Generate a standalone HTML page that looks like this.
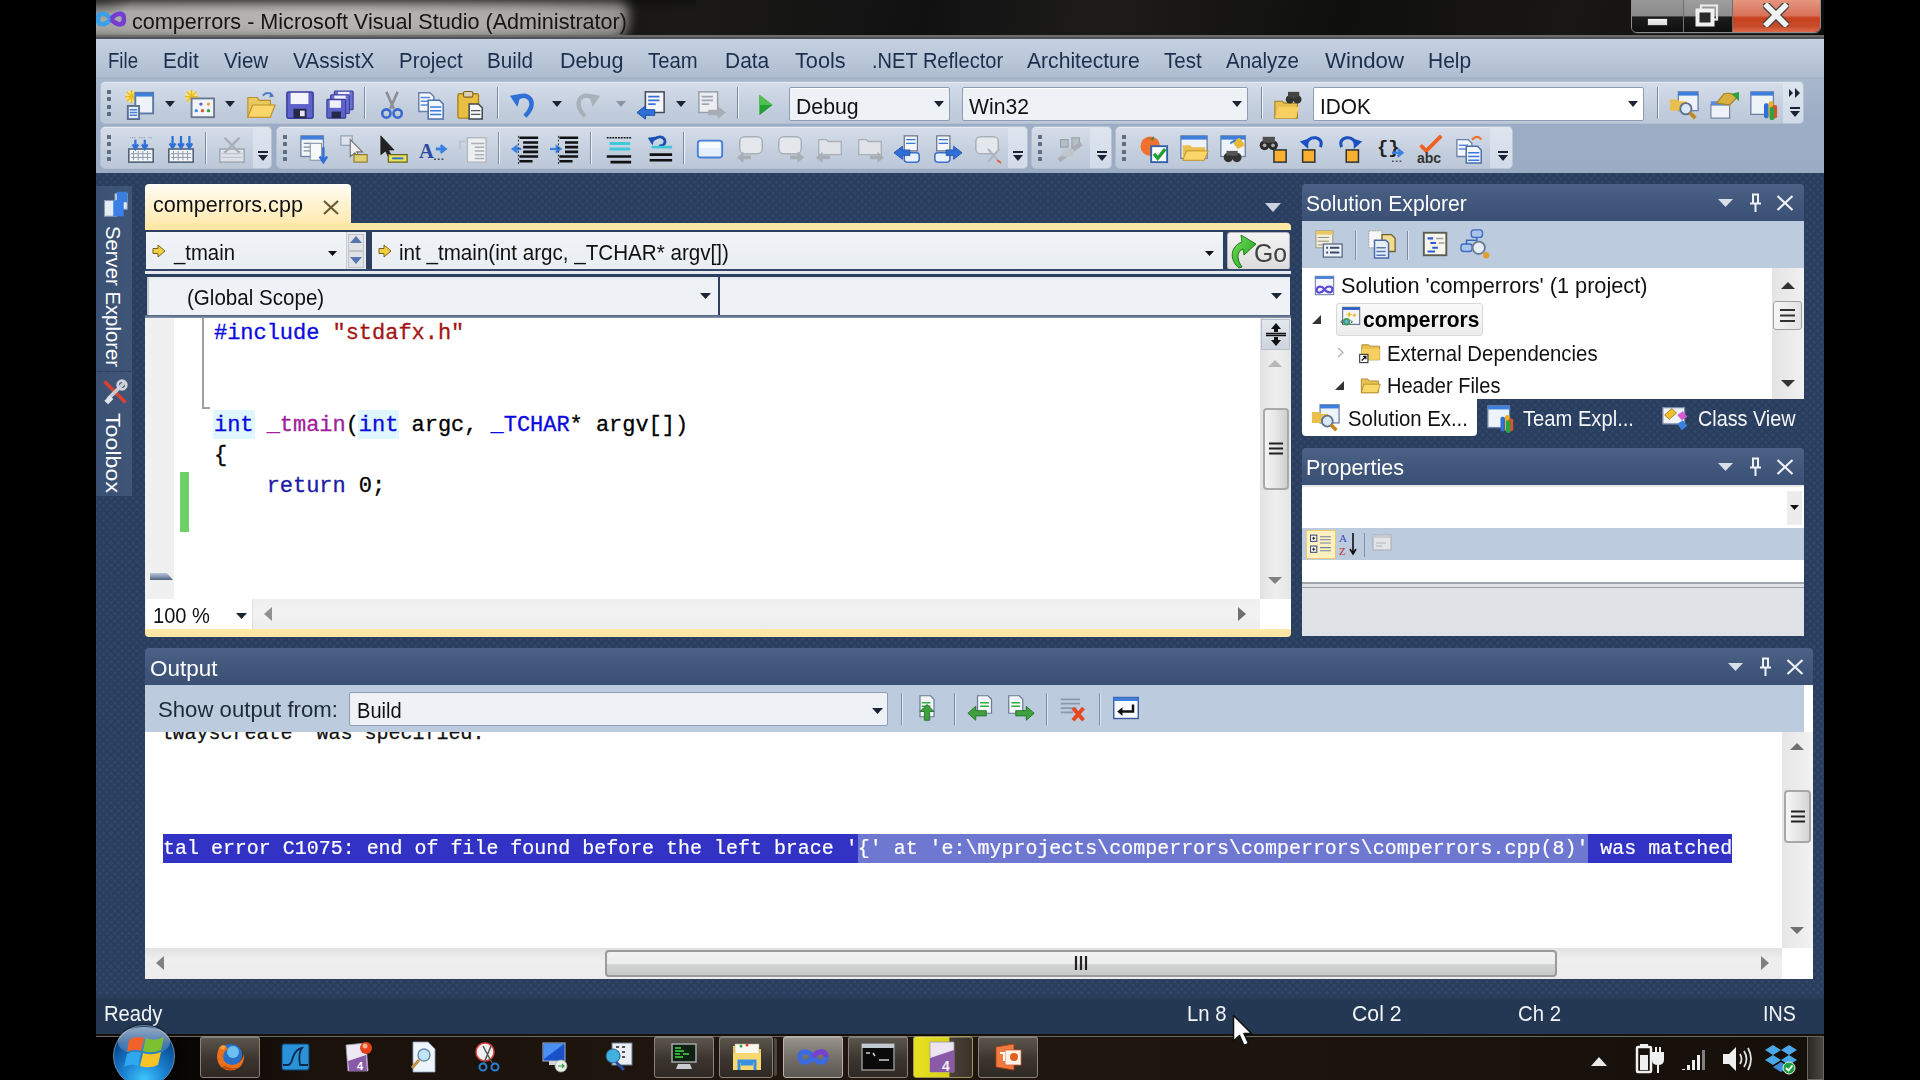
<!DOCTYPE html>
<html><head><meta charset="utf-8"><style>
*{margin:0;padding:0;box-sizing:border-box}
html,body{width:1920px;height:1080px;overflow:hidden;background:#000;font-family:"Liberation Sans",sans-serif}
.a{position:absolute}
.t{white-space:pre}
.pat{background-color:#293d5c;background-image:radial-gradient(circle,#30466a 0,#30466a 1.2px,transparent 2.2px),radial-gradient(circle,#30466a 0,#30466a 1.2px,transparent 2.2px);background-size:7.45px 7.45px;background-position:0 0,3.72px 3.72px}
</style></head><body>
<div class="a pat" style="left:96px;top:0;width:1728px;height:1034px"></div>
<div class="a" style="left:96px;top:0;width:1728px;height:39px;overflow:hidden;background:linear-gradient(100deg,#121110 0,#1a1918 35%,#111 48%,#1d1c1b 58%,#0f0f0e 72%,#181716 85%,#0d0d0c 100%)"><div class="a" style="left:-30px;top:-8px;width:562px;height:48px;background:radial-gradient(ellipse 60% 70% at 45% 55%,#bab9b5,#a8a7a3 70%,#8e8d89);border-radius:18px;filter:blur(6px)"></div><div class="a" style="left:0;top:0;width:600px;height:39px;background:linear-gradient(rgba(10,10,10,0.55) 0,rgba(10,10,10,0.15) 7px,transparent 12px)"></div><div class="a" style="left:-20px;top:-20px;width:60px;height:40px;background:radial-gradient(ellipse at 30% 30%,rgba(20,20,20,0.6),transparent 70%)"></div></div>
<div class="a" style="left:96px;top:35px;width:1728px;height:2px;background:#6c6c6a"></div>
<div class="a" style="left:96px;top:37px;width:1728px;height:2px;background:#50545a"></div>
<div class="a" style="left:96px;top:39px;width:1728px;height:40px;background:linear-gradient(#c6d2e1,#b0bed2 92%,#9eaec3 100%)"></div>
<div class="a" style="left:96px;top:79px;width:1728px;height:94px;background:linear-gradient(#a9b8cc,#9dadc5 40%,#9aabc3)"></div>
<div class="a" style="left:96px;top:993px;width:1728px;height:41px;background:linear-gradient(rgba(37,56,83,0) 0,#253853 8px,#253853)"></div>
<div class="a" style="left:96px;top:1034px;width:1728px;height:46px;background:linear-gradient(90deg,#000 0,#050302 4%,#1a110b 12%,#21170f 40%,#1c140d 70%,#150f0a 100%)"></div>
<div class="a" style="left:96px;top:1034px;width:1728px;height:2px;background:#15110d"></div>
<div class="a" style="left:96px;top:1036px;width:1728px;height:1px;background:#6e6a62"></div>
<svg class="a" style="left:96px;top:9px" width="30" height="20" viewBox="0 0 30 20"><path d="M2 10 C2 3,9 3,15 10 C21 17,28 17,28 10 C28 3,21 3,15 10 C9 17,2 17,2 10Z" fill="none" stroke="#3aa0e8" stroke-width="4.5"/><path d="M15 10 C21 17,28 17,28 10 C28 3,21 3,15 10" fill="none" stroke="#7a3ad0" stroke-width="4.5"/></svg>
<div class="a t" style="left:132px;top:10.87px;font-size:22px;line-height:22px;color:#151515;font-weight:normal;font-family:'Liberation Sans',sans-serif;transform-origin:0 0;transform:scaleX(0.9811);">comperrors - Microsoft Visual Studio (Administrator)</div>
<div class="a" style="left:1631px;top:-3px;width:190px;height:36px;border:1px solid #8a8c90;border-radius:0 0 6px 6px;overflow:hidden;box-shadow:0 1px 0 #2a2a2a"><div class="a" style="left:0;top:0;width:51px;height:35px;background:linear-gradient(#9a9a9a 0,#8a8a8a 50%,#1c1c1c 55%,#0e0e0e 100%)"></div><div class="a" style="left:52px;top:0;width:48px;height:35px;background:linear-gradient(#a0a0a0 0,#8e8e8e 50%,#1c1c1c 55%,#0e0e0e 100%)"></div><div class="a" style="left:51px;top:0;width:1px;height:35px;background:#707070"></div><div class="a" style="left:100px;top:0;width:1px;height:35px;background:#707070"></div><div class="a" style="left:101px;top:0;width:89px;height:35px;background:linear-gradient(#e89a82 0,#d8715a 50%,#c8401c 57%,#c84a2a 80%,#e07050 100%)"></div></div>
<div class="a" style="left:1647px;top:18px;width:21px;height:8px;background:linear-gradient(#f4f4f4,#d8d8d8);border:1px solid #333;border-radius:1px"></div>
<svg class="a" style="left:1694px;top:3px" width="26" height="24" viewBox="0 0 26 24"><rect x="7" y="2.5" width="16" height="14" fill="none" stroke="#e8e8e8" stroke-width="2.2"/><rect x="3.5" y="7.5" width="15" height="14" fill="#2a2a2a" stroke="#f0f0f0" stroke-width="4"/></svg>
<svg class="a" style="left:1763px;top:3px" width="26" height="24" viewBox="0 0 26 24"><path d="M4 3 L22 21 M22 3 L4 21" stroke="#404040" stroke-width="8" stroke-linecap="square"/><path d="M4 3 L22 21 M22 3 L4 21" stroke="#f2f2f2" stroke-width="5.5" stroke-linecap="square"/></svg>
<div class="a t" style="left:108.4px;top:49.70px;font-size:22.2px;line-height:22.2px;color:#1c2f4d;font-weight:normal;font-family:'Liberation Sans',sans-serif;transform-origin:0 0;transform:scaleX(0.8386);">File</div>
<div class="a t" style="left:163px;top:49.70px;font-size:22.2px;line-height:22.2px;color:#1c2f4d;font-weight:normal;font-family:'Liberation Sans',sans-serif;transform-origin:0 0;transform:scaleX(0.9332);">Edit</div>
<div class="a t" style="left:223.5px;top:49.70px;font-size:22.2px;line-height:22.2px;color:#1c2f4d;font-weight:normal;font-family:'Liberation Sans',sans-serif;transform-origin:0 0;transform:scaleX(0.9262);">View</div>
<div class="a t" style="left:292.5px;top:49.70px;font-size:22.2px;line-height:22.2px;color:#1c2f4d;font-weight:normal;font-family:'Liberation Sans',sans-serif;transform-origin:0 0;transform:scaleX(0.9349);">VAssistX</div>
<div class="a t" style="left:398.8px;top:49.70px;font-size:22.2px;line-height:22.2px;color:#1c2f4d;font-weight:normal;font-family:'Liberation Sans',sans-serif;transform-origin:0 0;transform:scaleX(0.9219);">Project</div>
<div class="a t" style="left:487px;top:49.70px;font-size:22.2px;line-height:22.2px;color:#1c2f4d;font-weight:normal;font-family:'Liberation Sans',sans-serif;transform-origin:0 0;transform:scaleX(0.9318);">Build</div>
<div class="a t" style="left:560px;top:49.70px;font-size:22.2px;line-height:22.2px;color:#1c2f4d;font-weight:normal;font-family:'Liberation Sans',sans-serif;transform-origin:0 0;transform:scaleX(0.9722);">Debug</div>
<div class="a t" style="left:648.4px;top:49.70px;font-size:22.2px;line-height:22.2px;color:#1c2f4d;font-weight:normal;font-family:'Liberation Sans',sans-serif;transform-origin:0 0;transform:scaleX(0.9137);">Team</div>
<div class="a t" style="left:724.5px;top:49.70px;font-size:22.2px;line-height:22.2px;color:#1c2f4d;font-weight:normal;font-family:'Liberation Sans',sans-serif;transform-origin:0 0;transform:scaleX(0.9447);">Data</div>
<div class="a t" style="left:794.7px;top:49.70px;font-size:22.2px;line-height:22.2px;color:#1c2f4d;font-weight:normal;font-family:'Liberation Sans',sans-serif;transform-origin:0 0;transform:scaleX(0.9783);">Tools</div>
<div class="a t" style="left:871.6px;top:49.70px;font-size:22.2px;line-height:22.2px;color:#1c2f4d;font-weight:normal;font-family:'Liberation Sans',sans-serif;transform-origin:0 0;transform:scaleX(0.9038);">.NET Reflector</div>
<div class="a t" style="left:1027px;top:49.70px;font-size:22.2px;line-height:22.2px;color:#1c2f4d;font-weight:normal;font-family:'Liberation Sans',sans-serif;transform-origin:0 0;transform:scaleX(0.9514);">Architecture</div>
<div class="a t" style="left:1164px;top:49.70px;font-size:22.2px;line-height:22.2px;color:#1c2f4d;font-weight:normal;font-family:'Liberation Sans',sans-serif;transform-origin:0 0;transform:scaleX(0.9235);">Test</div>
<div class="a t" style="left:1226px;top:49.70px;font-size:22.2px;line-height:22.2px;color:#1c2f4d;font-weight:normal;font-family:'Liberation Sans',sans-serif;transform-origin:0 0;transform:scaleX(0.9243);">Analyze</div>
<div class="a t" style="left:1325px;top:49.70px;font-size:22.2px;line-height:22.2px;color:#1c2f4d;font-weight:normal;font-family:'Liberation Sans',sans-serif;transform-origin:0 0;transform:scaleX(1.0005);">Window</div>
<div class="a t" style="left:1428.4px;top:49.70px;font-size:22.2px;line-height:22.2px;color:#1c2f4d;font-weight:normal;font-family:'Liberation Sans',sans-serif;transform-origin:0 0;transform:scaleX(0.9440);">Help</div>
<div class="a" style="left:100px;top:81px;width:1704px;height:43px;background:linear-gradient(#d5dde9,#c4cfde 60%,#bcc8d8);border:1px solid #b3bfd0;border-radius:5px;box-shadow:inset 0 1px 0 #e4eaf2"></div>
<div class="a" style="left:1783px;top:81px;width:21px;height:43px;background:linear-gradient(#dde5ef,#d2dbe8);border-radius:0 5px 5px 0;border:1px solid #b8c4d4;border-left:none"></div>
<div class="a" style="left:107px;top:90.0px;width:4px;height:4px;background:#5e6d82;border-radius:0.5px"></div>
<div class="a" style="left:107px;top:97.3px;width:4px;height:4px;background:#5e6d82;border-radius:0.5px"></div>
<div class="a" style="left:107px;top:104.6px;width:4px;height:4px;background:#5e6d82;border-radius:0.5px"></div>
<div class="a" style="left:107px;top:111.9px;width:4px;height:4px;background:#5e6d82;border-radius:0.5px"></div>
<div class="a" style="left:100px;top:126px;width:172px;height:43px;background:linear-gradient(#d5dde9,#c4cfde 60%,#bcc8d8);border:1px solid #b3bfd0;border-radius:5px;box-shadow:inset 0 1px 0 #e4eaf2"></div>
<div class="a" style="left:253px;top:126px;width:19px;height:43px;background:linear-gradient(#dde5ef,#d2dbe8);border-radius:0 5px 5px 0;border:1px solid #b8c4d4;border-left:none"></div>
<div class="a" style="left:107px;top:135.0px;width:4px;height:4px;background:#5e6d82;border-radius:0.5px"></div>
<div class="a" style="left:107px;top:142.3px;width:4px;height:4px;background:#5e6d82;border-radius:0.5px"></div>
<div class="a" style="left:107px;top:149.6px;width:4px;height:4px;background:#5e6d82;border-radius:0.5px"></div>
<div class="a" style="left:107px;top:156.9px;width:4px;height:4px;background:#5e6d82;border-radius:0.5px"></div>
<div class="a" style="left:276px;top:126px;width:752px;height:43px;background:linear-gradient(#d5dde9,#c4cfde 60%,#bcc8d8);border:1px solid #b3bfd0;border-radius:5px;box-shadow:inset 0 1px 0 #e4eaf2"></div>
<div class="a" style="left:1008px;top:126px;width:20px;height:43px;background:linear-gradient(#dde5ef,#d2dbe8);border-radius:0 5px 5px 0;border:1px solid #b8c4d4;border-left:none"></div>
<div class="a" style="left:283px;top:135.0px;width:4px;height:4px;background:#5e6d82;border-radius:0.5px"></div>
<div class="a" style="left:283px;top:142.3px;width:4px;height:4px;background:#5e6d82;border-radius:0.5px"></div>
<div class="a" style="left:283px;top:149.6px;width:4px;height:4px;background:#5e6d82;border-radius:0.5px"></div>
<div class="a" style="left:283px;top:156.9px;width:4px;height:4px;background:#5e6d82;border-radius:0.5px"></div>
<div class="a" style="left:1031px;top:126px;width:81px;height:43px;background:linear-gradient(#d5dde9,#c4cfde 60%,#bcc8d8);border:1px solid #b3bfd0;border-radius:5px;box-shadow:inset 0 1px 0 #e4eaf2"></div>
<div class="a" style="left:1090px;top:126px;width:22px;height:43px;background:linear-gradient(#dde5ef,#d2dbe8);border-radius:0 5px 5px 0;border:1px solid #b8c4d4;border-left:none"></div>
<div class="a" style="left:1038px;top:135.0px;width:4px;height:4px;background:#5e6d82;border-radius:0.5px"></div>
<div class="a" style="left:1038px;top:142.3px;width:4px;height:4px;background:#5e6d82;border-radius:0.5px"></div>
<div class="a" style="left:1038px;top:149.6px;width:4px;height:4px;background:#5e6d82;border-radius:0.5px"></div>
<div class="a" style="left:1038px;top:156.9px;width:4px;height:4px;background:#5e6d82;border-radius:0.5px"></div>
<div class="a" style="left:1115px;top:126px;width:398px;height:43px;background:linear-gradient(#d5dde9,#c4cfde 60%,#bcc8d8);border:1px solid #b3bfd0;border-radius:5px;box-shadow:inset 0 1px 0 #e4eaf2"></div>
<div class="a" style="left:1490px;top:126px;width:23px;height:43px;background:linear-gradient(#dde5ef,#d2dbe8);border-radius:0 5px 5px 0;border:1px solid #b8c4d4;border-left:none"></div>
<div class="a" style="left:1122px;top:135.0px;width:4px;height:4px;background:#5e6d82;border-radius:0.5px"></div>
<div class="a" style="left:1122px;top:142.3px;width:4px;height:4px;background:#5e6d82;border-radius:0.5px"></div>
<div class="a" style="left:1122px;top:149.6px;width:4px;height:4px;background:#5e6d82;border-radius:0.5px"></div>
<div class="a" style="left:1122px;top:156.9px;width:4px;height:4px;background:#5e6d82;border-radius:0.5px"></div>
<div class="a" style="left:364px;top:87px;width:1px;height:32px;background:#7d8ca2;box-shadow:1px 0 0 #eef2f7"></div>
<div class="a" style="left:497px;top:87px;width:1px;height:32px;background:#7d8ca2;box-shadow:1px 0 0 #eef2f7"></div>
<div class="a" style="left:737px;top:87px;width:1px;height:32px;background:#7d8ca2;box-shadow:1px 0 0 #eef2f7"></div>
<div class="a" style="left:1261px;top:87px;width:1px;height:32px;background:#7d8ca2;box-shadow:1px 0 0 #eef2f7"></div>
<div class="a" style="left:1657px;top:87px;width:1px;height:32px;background:#7d8ca2;box-shadow:1px 0 0 #eef2f7"></div>
<div class="a" style="left:205px;top:132px;width:1px;height:32px;background:#7d8ca2;box-shadow:1px 0 0 #eef2f7"></div>
<div class="a" style="left:498px;top:132px;width:1px;height:32px;background:#7d8ca2;box-shadow:1px 0 0 #eef2f7"></div>
<div class="a" style="left:590px;top:132px;width:1px;height:32px;background:#7d8ca2;box-shadow:1px 0 0 #eef2f7"></div>
<div class="a" style="left:683px;top:132px;width:1px;height:32px;background:#7d8ca2;box-shadow:1px 0 0 #eef2f7"></div>
<svg class="a" style="left:165px;top:101px" width="10" height="6" viewBox="0 0 10 6"><path d="M0 0 H10 L5.0 6Z" fill="#1a2435"/></svg>
<svg class="a" style="left:225px;top:101px" width="10" height="6" viewBox="0 0 10 6"><path d="M0 0 H10 L5.0 6Z" fill="#1a2435"/></svg>
<svg class="a" style="left:552px;top:101px" width="10" height="6" viewBox="0 0 10 6"><path d="M0 0 H10 L5.0 6Z" fill="#1a2435"/></svg>
<svg class="a" style="left:616px;top:101px" width="10" height="6" viewBox="0 0 10 6"><path d="M0 0 H10 L5.0 6Z" fill="#8a94a3"/></svg>
<svg class="a" style="left:676px;top:101px" width="10" height="6" viewBox="0 0 10 6"><path d="M0 0 H10 L5.0 6Z" fill="#1a2435"/></svg>
<div class="a" style="left:258px;top:151px;width:10px;height:2px;background:#1a2435"></div>
<svg class="a" style="left:258px;top:155px" width="10" height="6" viewBox="0 0 10 6"><path d="M0 0 H10 L5 6Z" fill="#1a2435"/></svg>
<div class="a" style="left:1013px;top:151px;width:10px;height:2px;background:#1a2435"></div>
<svg class="a" style="left:1013px;top:155px" width="10" height="6" viewBox="0 0 10 6"><path d="M0 0 H10 L5 6Z" fill="#1a2435"/></svg>
<div class="a" style="left:1097px;top:151px;width:10px;height:2px;background:#1a2435"></div>
<svg class="a" style="left:1097px;top:155px" width="10" height="6" viewBox="0 0 10 6"><path d="M0 0 H10 L5 6Z" fill="#1a2435"/></svg>
<div class="a" style="left:1498px;top:151px;width:10px;height:2px;background:#1a2435"></div>
<svg class="a" style="left:1498px;top:155px" width="10" height="6" viewBox="0 0 10 6"><path d="M0 0 H10 L5 6Z" fill="#1a2435"/></svg>
<svg class="a" style="left:1789px;top:88px" width="12" height="10" viewBox="0 0 12 10"><path d="M0 1 L4 5 L0 9Z M6 0 L11 5 L6 10Z" fill="#1a2435"/></svg>
<div class="a" style="left:1790px;top:107px;width:10px;height:2px;background:#1a2435"></div>
<svg class="a" style="left:1790px;top:111px" width="10" height="6" viewBox="0 0 10 6"><path d="M0 0 H10 L5 6Z" fill="#1a2435"/></svg>
<div class="a" style="left:789px;top:87px;width:161px;height:34px;background:#eef2f7;border:1px solid #8e9db3;border-radius:2px;box-shadow:inset 0 1px 0 #fff"></div>
<div class="a t" style="left:796px;top:96.00px;font-size:22.2px;line-height:22.2px;color:#111;font-weight:normal;font-family:'Liberation Sans',sans-serif;transform-origin:0 0;transform:scaleX(0.9584);">Debug</div>
<svg class="a" style="left:934px;top:101px" width="10" height="6" viewBox="0 0 10 6"><path d="M0 0 H10 L5.0 6Z" fill="#1a2435"/></svg>
<div class="a" style="left:962px;top:87px;width:286px;height:34px;background:#eef2f7;border:1px solid #8e9db3;border-radius:2px;box-shadow:inset 0 1px 0 #fff"></div>
<div class="a t" style="left:969px;top:96.00px;font-size:22.2px;line-height:22.2px;color:#111;font-weight:normal;font-family:'Liberation Sans',sans-serif;transform-origin:0 0;transform:scaleX(0.9535);">Win32</div>
<svg class="a" style="left:1232px;top:101px" width="10" height="6" viewBox="0 0 10 6"><path d="M0 0 H10 L5.0 6Z" fill="#1a2435"/></svg>
<div class="a" style="left:1313px;top:87px;width:331px;height:34px;background:#ffffff;border:1px solid #8e9db3;border-radius:2px;box-shadow:inset 0 1px 0 #fff"></div>
<div class="a t" style="left:1320px;top:96.00px;font-size:22.2px;line-height:22.2px;color:#111;font-weight:normal;font-family:'Liberation Sans',sans-serif;transform-origin:0 0;transform:scaleX(0.9396);">IDOK</div>
<svg class="a" style="left:1628px;top:101px" width="10" height="6" viewBox="0 0 10 6"><path d="M0 0 H10 L5.0 6Z" fill="#1a2435"/></svg>
<svg class="a" style="left:125px;top:90px" width="30" height="30" viewBox="0 0 16 16"><circle cx="3.5" cy="3.5" r="3.2" fill="#f7e27a"/><path d="M3.5 0 V7 M0 3.5 H7 M1 1 L6 6 M6 1 L1 6" stroke="#e9b820" stroke-width="0.7"/><rect x="5.5" y="1.5" width="9.5" height="11" fill="#eef3fa" stroke="#5a78a8"/><rect x="5.5" y="1.5" width="9.5" height="2" fill="#3f7fdc"/><rect x="1.5" y="8.5" width="6" height="7" fill="#e4ecf8" stroke="#5a6e90"/><path d="M2.5 10.5h4M2.5 12h4M2.5 13.5h4" stroke="#4a82d8" stroke-width="0.8"/></svg>
<svg class="a" style="left:185px;top:90px" width="30" height="30" viewBox="0 0 16 16"><circle cx="3.5" cy="3.5" r="3.2" fill="#f7e27a"/><path d="M3.5 0 V7 M0 3.5 H7 M1 1 L6 6 M6 1 L1 6" stroke="#e9b820" stroke-width="0.7"/><rect x="3.5" y="4.5" width="12" height="10" fill="#f1f4f9" stroke="#6a7890"/><circle cx="8.5" cy="7.5" r="0.9" fill="#6a5ad0"/><circle cx="12.5" cy="7.5" r="0.9" fill="#f0a030"/><circle cx="6" cy="11" r="0.9" fill="#3a8ee0"/><circle cx="9.3" cy="11" r="0.9" fill="#e05030"/><circle cx="12.5" cy="11" r="0.9" fill="#30a040"/></svg>
<svg class="a" style="left:246px;top:90px" width="30" height="30" viewBox="0 0 16 16"><path d="M1 4 h5 l1 1.5 h6 v9 H1Z" fill="#e9c860" stroke="#b89030" stroke-width="0.6"/><path d="M1 14.5 L3.5 8 H15.5 L13 14.5Z" fill="#fbd66a" stroke="#c09028" stroke-width="0.6"/><path d="M9 3 Q11 0.5 14 2.5" fill="none" stroke="#4a78c0" stroke-width="1"/><path d="M13 1 L15 3.5 L12.5 4Z" fill="#4a78c0"/></svg>
<svg class="a" style="left:285px;top:90px" width="30" height="30" viewBox="0 0 16 16"><rect x="1" y="1" width="14" height="14" rx="1" fill="#5e63cc" stroke="#3a3e98" stroke-width="0.8"/><rect x="3" y="1.5" width="9.5" height="6" fill="#f4f5fa"/><rect x="4.5" y="10" width="7" height="5" fill="#26284a"/><rect x="8" y="11" width="2.5" height="3" fill="#e8e8f0"/></svg>
<svg class="a" style="left:325px;top:90px" width="30" height="30" viewBox="0 0 16 16"><rect x="5" y="0.5" width="10" height="10" rx="0.5" fill="#6a6fd0" stroke="#3a3e98" stroke-width="0.6"/><rect x="7" y="1" width="6" height="2" fill="#eef"/><rect x="3" y="2.5" width="10" height="10" rx="0.5" fill="#6a6fd0" stroke="#3a3e98" stroke-width="0.6"/><rect x="5" y="3" width="6" height="2" fill="#eef"/><rect x="1" y="5" width="10" height="10" rx="0.5" fill="#5e63cc" stroke="#3a3e98" stroke-width="0.6"/><rect x="2.5" y="5.5" width="6" height="4" fill="#f0f0f8"/><rect x="3.5" y="11.5" width="5" height="3.5" fill="#26284a"/></svg>
<svg class="a" style="left:377px;top:90px" width="30" height="30" viewBox="0 0 16 16"><path d="M5 1 L9 10 M11 1 L7 10" stroke="#8a8e98" stroke-width="1.4"/><circle cx="5" cy="12.5" r="2.2" fill="none" stroke="#3a6ad0" stroke-width="1.4"/><circle cx="11" cy="12.5" r="2.2" fill="none" stroke="#3a6ad0" stroke-width="1.4"/></svg>
<svg class="a" style="left:416px;top:90px" width="30" height="30" viewBox="0 0 16 16"><path d="M1.5 1.5 h6 l2 2 v8 h-8Z" fill="#f4f7fc" stroke="#6a80a8" stroke-width="0.8"/><path d="M2.5 4h5M2.5 6h5M2.5 8h5" stroke="#5a8ae0" stroke-width="0.7"/><path d="M6.5 5.5 h6 l2 2 v8 h-8Z" fill="#f4f7fc" stroke="#4a70b0" stroke-width="0.8"/><path d="M7.5 9h6M7.5 11h6M7.5 13h6" stroke="#3a7ae0" stroke-width="0.8"/></svg>
<svg class="a" style="left:456px;top:90px" width="30" height="30" viewBox="0 0 16 16"><rect x="1" y="2" width="11" height="13" rx="1" fill="#e8bf40" stroke="#a88020" stroke-width="0.7"/><rect x="4" y="0.8" width="5" height="3" rx="0.8" fill="#d8d0b0" stroke="#806020" stroke-width="0.6"/><path d="M7 7.5 h5 l2 2 v6 h-7Z" fill="#f4f6fa" stroke="#404850" stroke-width="0.8"/><path d="M8 11h5M8 13h5" stroke="#505860" stroke-width="0.7"/></svg>
<svg class="a" style="left:508px;top:90px" width="30" height="30" viewBox="0 0 16 16"><path d="M4 5 Q9 1 12 5 Q14 9 9 14" fill="none" stroke="#2e70d8" stroke-width="2.4"/><path d="M1 3 L7 2 L5 9Z" fill="#2e70d8"/></svg>
<svg class="a" style="left:572px;top:90px" width="30" height="30" viewBox="0 0 16 16"><path d="M12 5 Q7 1 4 5 Q2 9 7 14" fill="none" stroke="#a8b0ba" stroke-width="2.2"/><path d="M15 3 L9 2 L11 9Z" fill="#a8b0ba"/></svg>
<svg class="a" style="left:636px;top:90px" width="30" height="30" viewBox="0 0 16 16"><rect x="5" y="1" width="10" height="11" fill="#f4f6fa" stroke="#404a58" stroke-width="0.8"/><path d="M6.5 3.5h6M6.5 5.5h6M6.5 7.5h4" stroke="#3a70d8" stroke-width="0.9"/><path d="M0.5 12 L5 8.5 V10.5 H10 V13.5 H5 V15.5Z" fill="#2e70d8" stroke="#1a4aa0" stroke-width="0.5"/></svg>
<svg class="a" style="left:697px;top:90px" width="30" height="30" viewBox="0 0 16 16"><rect x="1" y="1" width="10" height="11" fill="#eceef2" stroke="#9aa0a8" stroke-width="0.8"/><path d="M2.5 3.5h6M2.5 5.5h6M2.5 7.5h4" stroke="#a0a6b0" stroke-width="0.9"/><path d="M15.5 12 L11 8.5 V10.5 H6 V13.5 H11 V15.5Z" fill="#a8adb5"/></svg>
<svg class="a" style="left:750px;top:90px" width="30" height="30" viewBox="0 0 16 16"><path d="M5 2.5 L12 8 L5 13.5Z" fill="#20a030"/><path d="M5 2.5 L12 8 L5 8Z" fill="#50c050"/></svg>
<svg class="a" style="left:1273px;top:90px" width="30" height="30" viewBox="0 0 16 16"><path d="M1 6 h4 l1 1 h7 v8 H1Z" fill="#e8c050" stroke="#a88020" stroke-width="0.6"/><path d="M1 15 L3 9 H14 L12 15Z" fill="#f8d060"/><circle cx="9" cy="5" r="2.2" fill="#333"/><circle cx="13" cy="5" r="2.2" fill="#333"/><rect x="8" y="1" width="6" height="3" fill="#444"/></svg>
<svg class="a" style="left:1669px;top:90px" width="30" height="30" viewBox="0 0 16 16"><rect x="5" y="1" width="10.5" height="10" fill="#eef3fa" stroke="#6a80a8" stroke-width="0.7"/><rect x="5" y="1" width="10.5" height="2" fill="#3f7fdc"/><path d="M0.5 5 h4 l1 1 h4 v5 h-9Z" fill="#e8c050"/><circle cx="9" cy="10" r="3" fill="#d8e8f8" stroke="#607090" stroke-width="1"/><path d="M11 12 L14 15" stroke="#c08820" stroke-width="2"/></svg>
<svg class="a" style="left:1709px;top:90px" width="30" height="30" viewBox="0 0 16 16"><rect x="1" y="8" width="10" height="7" fill="#eef2f8" stroke="#7a8aa8" stroke-width="0.7"/><rect x="1" y="6" width="10" height="2" fill="#5a8ae0"/><path d="M4 7 L8 2 Q12 1 15 4 L11 8Z" fill="#d8b040" stroke="#a08020" stroke-width="0.6"/><path d="M12 2 L16 1 V6Z" fill="#30a040"/></svg>
<svg class="a" style="left:1749px;top:90px" width="30" height="30" viewBox="0 0 16 16"><rect x="1" y="1" width="12" height="12" fill="#eef3fa" stroke="#6a80a8" stroke-width="0.7"/><rect x="1" y="1" width="12" height="2" fill="#3f7fdc"/><rect x="8" y="7" width="2.5" height="8" rx="1" fill="#2e70d8"/><rect x="10.5" y="6" width="2.5" height="9" rx="1" fill="#f0b020"/><rect x="12.5" y="8" width="2.5" height="7" rx="1" fill="#e05028"/><rect x="11" y="9" width="2.5" height="7" rx="1" fill="#30a040"/></svg>
<svg class="a" style="left:126px;top:134px" width="30" height="30" viewBox="0 0 16 16"><rect x="1.5" y="8" width="13" height="7" fill="#f4f6f8" stroke="#4a5a70" stroke-width="0.8"/><path d="M2.5 10.5h11M2.5 12.5h11M4 9v5M6.5 9v5M9 9v5M11.5 9v5" stroke="#8a98a8" stroke-width="0.5"/><path d="M2 2 L5 2 M7 2 L10 2 M12 2 L14 2" stroke="#8090a8" stroke-width="0.6" stroke-dasharray="0.6 0.6"/><path d="M5 3 V7 M3.5 5.5 L5 8 L6.5 5.5 M10 3 V7 M8.5 5.5 L10 8 L11.5 5.5" stroke="#2e70d8" stroke-width="1.2" fill="none"/></svg>
<svg class="a" style="left:166px;top:134px" width="30" height="30" viewBox="0 0 16 16"><rect x="1.5" y="8" width="13" height="7" fill="#f4f6f8" stroke="#4a5a70" stroke-width="0.8"/><path d="M2.5 10.5h11M2.5 12.5h11M4 9v5M6.5 9v5M9 9v5M11.5 9v5" stroke="#8a98a8" stroke-width="0.5"/><path d="M3.5 1 V7 M2 5 L3.5 7.5 L5 5 M8 1 V7 M6.5 5 L8 7.5 L9.5 5 M12.5 1 V7 M11 5 L12.5 7.5 L14 5" stroke="#2e70d8" stroke-width="1.2" fill="none"/></svg>
<svg class="a" style="left:217px;top:134px" width="30" height="30" viewBox="0 0 16 16"><rect x="1.5" y="8" width="13" height="7" fill="#dde2e8" stroke="#a0a8b2" stroke-width="0.8"/><path d="M2.5 10.5h11M2.5 12.5h11" stroke="#b8c0c8" stroke-width="0.5"/><path d="M4 2 L12 10 M12 2 L4 10" stroke="#a8aeb6" stroke-width="1.3"/></svg>
<svg class="a" style="left:299px;top:134px" width="30" height="30" viewBox="0 0 16 16"><rect x="1" y="1" width="12" height="11" fill="#f2f5fa" stroke="#6a80a8" stroke-width="0.7"/><rect x="1" y="1" width="12" height="2" fill="#3f7fdc"/><path d="M2.5 5h4M2.5 7h4M2.5 9h4" stroke="#8090a0" stroke-width="0.7"/><rect x="6" y="5" width="6" height="9" fill="#f8f9fb" stroke="#8a98a8" stroke-width="0.6"/><path d="M13 7 V14 M11 12 L13 15 L15 12" stroke="#2e70d8" stroke-width="1.3" fill="none"/></svg>
<svg class="a" style="left:339px;top:134px" width="30" height="30" viewBox="0 0 16 16"><rect x="1" y="1" width="6" height="5" fill="#dde4ee" stroke="#8a9ab0" stroke-width="0.6"/><path d="M6 3 V12 L8.5 10 L10 13 L11 12.5 L9.5 9.5 L12.5 9.5Z" fill="#f0f0f0" stroke="#707070" stroke-width="0.6"/><rect x="8" y="11" width="7" height="4" fill="#e0d070" stroke="#8a7a30" stroke-width="0.6"/></svg>
<svg class="a" style="left:379px;top:134px" width="30" height="30" viewBox="0 0 16 16"><path d="M1 1 V11 L3.5 9 L5.5 13 L7 12.3 L5 8.5 L8 8.5Z" fill="#222" stroke="#111" stroke-width="0.4"/><rect x="5" y="11" width="10" height="4" fill="#e8e060" stroke="#6a6a20" stroke-width="0.7"/><rect x="7" y="12.5" width="6" height="1" fill="#2a70c0"/></svg>
<svg class="a" style="left:419px;top:134px" width="30" height="30" viewBox="0 0 16 16"><text x="0" y="13" font-family="Liberation Serif" font-weight="bold" font-size="11" fill="#2a4aa0">A</text><path d="M9 8 H13 M11.5 6 L14 8 L11.5 10" stroke="#3a80e0" stroke-width="1.5" fill="none"/><path d="M8 13.5h1M10 13.5h1M12 13.5h1" stroke="#445" stroke-width="0.8"/></svg>
<svg class="a" style="left:458px;top:134px" width="30" height="30" viewBox="0 0 16 16"><rect x="5" y="2" width="10" height="13" fill="#eceef0" stroke="#b0b6be" stroke-width="0.7"/><path d="M7 5h7M9 7h5M9 9h5M9 11h5M9 13h5" stroke="#a8aeb6" stroke-width="0.8"/><path d="M1 4 V8 M1 4 H4" stroke="#b8bec6" stroke-width="0.8"/></svg>
<svg class="a" style="left:510px;top:134px" width="30" height="30" viewBox="0 0 16 16"><path d="M5 2h10M7 4.5h8M7 7h8M7 9.5h8M5 12h10M5 14.5h7" stroke="#111" stroke-width="1.4"/><path d="M0.5 8 L4 5.5 V10.5Z" fill="#3a80e0"/><path d="M3 8h3" stroke="#3a80e0" stroke-width="1.2"/><path d="M4.5 1v15" stroke="#222" stroke-width="0.5" stroke-dasharray="1 1"/></svg>
<svg class="a" style="left:550px;top:134px" width="30" height="30" viewBox="0 0 16 16"><path d="M5 2h10M8 4.5h7M8 7h7M8 9.5h7M5 12h10M5 14.5h7" stroke="#111" stroke-width="1.4"/><path d="M6.5 8 L3 5.5 V10.5Z" fill="#3a80e0"/><path d="M0 8h3.5" stroke="#3a80e0" stroke-width="1.2"/><path d="M4.5 1v15" stroke="#222" stroke-width="0.5" stroke-dasharray="1 1"/></svg>
<svg class="a" style="left:603px;top:134px" width="30" height="30" viewBox="0 0 16 16"><path d="M2 2h13" stroke="#111" stroke-width="0.9" stroke-dasharray="1 0.5"/><path d="M3.5 5h11M3.5 8h11" stroke="#40c8d8" stroke-width="1.6"/><path d="M2 12h13M4 15h11" stroke="#111" stroke-width="1.4"/></svg>
<svg class="a" style="left:644px;top:134px" width="30" height="30" viewBox="0 0 16 16"><path d="M5 3 Q9 0 11 3 Q12 6 8 6.5" fill="none" stroke="#1a50b0" stroke-width="1.5"/><path d="M2 2 L6 1.5 L4.5 6Z" fill="#1a50b0"/><path d="M4 7h11" stroke="#40c8d8" stroke-width="1.4"/><path d="M3 11h12M3 14h12" stroke="#111" stroke-width="1.4"/></svg>
<svg class="a" style="left:695px;top:134px" width="30" height="30" viewBox="0 0 16 16"><rect x="1.5" y="3.5" width="13" height="9" rx="1.5" fill="#e4eefc" stroke="#4a80d8" stroke-width="1"/><rect x="2.5" y="4.5" width="11" height="3" fill="#f8fbff"/></svg>
<svg class="a" style="left:736px;top:134px" width="30" height="30" viewBox="0 0 16 16"><rect x="2" y="1.5" width="12" height="9" rx="2.5" fill="#e4e8ec" stroke="#aab0b8" stroke-width="0.8"/><path d="M0.5 12.5 L4 9.5 V11.5 H8 V13.5 H4 V15.5Z" fill="#a8aeb6"/></svg>
<svg class="a" style="left:775px;top:134px" width="30" height="30" viewBox="0 0 16 16"><rect x="2" y="1.5" width="12" height="9" rx="2.5" fill="#e4e8ec" stroke="#aab0b8" stroke-width="0.8"/><path d="M15.5 12.5 L12 9.5 V11.5 H8 V13.5 H12 V15.5Z" fill="#a8aeb6"/></svg>
<svg class="a" style="left:815px;top:134px" width="30" height="30" viewBox="0 0 16 16"><path d="M2 3 h4 l1 1 h7 v7 H2Z" fill="#dfe3e8" stroke="#aab0b8" stroke-width="0.7"/><path d="M0.5 12.5 L4 9.5 V11.5 H8 V13.5 H4 V15.5Z" fill="#a8aeb6"/></svg>
<svg class="a" style="left:855px;top:134px" width="30" height="30" viewBox="0 0 16 16"><path d="M2 3 h4 l1 1 h7 v7 H2Z" fill="#dfe3e8" stroke="#aab0b8" stroke-width="0.7"/><path d="M15.5 12.5 L12 9.5 V11.5 H8 V13.5 H12 V15.5Z" fill="#a8aeb6"/></svg>
<svg class="a" style="left:893px;top:134px" width="30" height="30" viewBox="0 0 16 16"><rect x="6" y="1" width="7" height="8" fill="#f4f6fa" stroke="#5a6a88" stroke-width="0.6"/><path d="M7 3h5M7 5h5" stroke="#3a78d8" stroke-width="0.7"/><rect x="6" y="10" width="8" height="5" rx="1.5" fill="#e8f0fa" stroke="#3a70c8" stroke-width="0.8"/><path d="M0.5 10 L5 6.5 V8.5 H9 V11.5 H5 V13.5Z" fill="#2e70d8" stroke="#1a4aa0" stroke-width="0.4"/></svg>
<svg class="a" style="left:933px;top:134px" width="30" height="30" viewBox="0 0 16 16"><rect x="2" y="1" width="7" height="8" fill="#f4f6fa" stroke="#5a6a88" stroke-width="0.6"/><path d="M3 3h5M3 5h5" stroke="#3a78d8" stroke-width="0.7"/><rect x="1" y="10" width="8" height="5" rx="1.5" fill="#e8f0fa" stroke="#3a70c8" stroke-width="0.8"/><path d="M15.5 10 L11 6.5 V8.5 H7 V11.5 H11 V13.5Z" fill="#2e70d8" stroke="#1a4aa0" stroke-width="0.4"/></svg>
<svg class="a" style="left:973px;top:134px" width="30" height="30" viewBox="0 0 16 16"><rect x="1.5" y="1.5" width="12" height="9" rx="2.5" fill="#e4e8ec" stroke="#aab0b8" stroke-width="0.8"/><path d="M8 8 L14 15 M14 8 L8 15" stroke="#b0b6be" stroke-width="1.2"/><path d="M13 14 L15 15.5" stroke="#e06040" stroke-width="1"/></svg>
<svg class="a" style="left:1055px;top:134px" width="30" height="30" viewBox="0 0 16 16"><path d="M3 3 h4 v4 h-4Z M9 2 h4 v5 h-4Z" fill="#b8bec6" stroke="#98a0a8" stroke-width="0.6"/><path d="M2 14 L14 5" stroke="#a8aeb6" stroke-width="2.5"/><path d="M4 8 h6 v4 h-6Z" fill="#c0c6cc"/></svg>
<svg class="a" style="left:1139px;top:134px" width="30" height="30" viewBox="0 0 16 16"><circle cx="6" cy="6.5" r="5.2" fill="#f07030"/><path d="M4 1.5 L6 3 L8 1 L7.5 3.5Z" fill="#308030"/><rect x="6.5" y="6.5" width="8.5" height="8.5" fill="#f8fbff" stroke="#3060a8" stroke-width="1"/><path d="M8 10.5 L10 13 L14 8" fill="none" stroke="#20a030" stroke-width="1.8"/></svg>
<svg class="a" style="left:1179px;top:134px" width="30" height="30" viewBox="0 0 16 16"><rect x="1" y="1" width="14" height="12" fill="#eef3fa" stroke="#6a80a8" stroke-width="0.7"/><rect x="1" y="1" width="14" height="2" fill="#3f7fdc"/><path d="M2 6 h4 l1 1 h7 v7 H2Z" fill="#e8c050"/><path d="M2 14 L4 9 H15.5 L13.5 14Z" fill="#fbd66a" stroke="#c09028" stroke-width="0.5"/></svg>
<svg class="a" style="left:1219px;top:134px" width="30" height="30" viewBox="0 0 16 16"><rect x="1" y="1" width="13" height="11" fill="#eef3fa" stroke="#6a80a8" stroke-width="0.7"/><rect x="1" y="1" width="13" height="2" fill="#3f7fdc"/><path d="M7 4 L11 2 L14 6 L10 8Z" fill="#e8b838"/><path d="M6 5 L9 3" stroke="#3a80e0" stroke-width="1"/><circle cx="5" cy="12.5" r="2.5" fill="#333"/><circle cx="9.5" cy="12.5" r="2.5" fill="#333"/><rect x="4" y="9" width="6" height="2.5" fill="#555"/></svg>
<svg class="a" style="left:1258px;top:134px" width="30" height="30" viewBox="0 0 16 16"><circle cx="3.5" cy="6" r="2.6" fill="#2a2a2a"/><circle cx="8" cy="6" r="2.6" fill="#2a2a2a"/><rect x="2.5" y="1.5" width="6.5" height="3" fill="#505050"/><circle cx="3.5" cy="6" r="1" fill="#aaa"/><circle cx="8" cy="6" r="1" fill="#aaa"/><rect x="8.5" y="8.5" width="6.5" height="6.5" fill="#f8b030" stroke="#303030" stroke-width="0.8"/></svg>
<svg class="a" style="left:1297px;top:134px" width="30" height="30" viewBox="0 0 16 16"><path d="M5 5.5 Q6 1.5 10 2 Q14 3 12.5 7" fill="none" stroke="#1a50c0" stroke-width="1.6"/><path d="M1.5 4 L6 2.5 L6 8Z" fill="#1a50c0"/><rect x="3" y="8.5" width="6.5" height="6.5" fill="#f8b030" stroke="#303030" stroke-width="0.8"/></svg>
<svg class="a" style="left:1335px;top:134px" width="30" height="30" viewBox="0 0 16 16"><path d="M11 5.5 Q10 1.5 6 2 Q2 3 3.5 7" fill="none" stroke="#1a50c0" stroke-width="1.6"/><path d="M14.5 4 L10 2.5 L10 8Z" fill="#1a50c0"/><rect x="6" y="8.5" width="6.5" height="6.5" fill="#f8b030" stroke="#303030" stroke-width="0.8"/></svg>
<svg class="a" style="left:1377px;top:134px" width="30" height="30" viewBox="0 0 16 16"><text x="0" y="10" font-family="Liberation Mono" font-weight="bold" font-size="10" fill="#222">{}</text><path d="M8 10h5M11 8l2.5 2l-2.5 2" stroke="#3a80e0" stroke-width="1.3" fill="none"/><path d="M8 14.5h1M10 14.5h1M12 14.5h1" stroke="#556" stroke-width="0.8"/></svg>
<svg class="a" style="left:1415px;top:134px" width="30" height="30" viewBox="0 0 16 16"><path d="M3 6 L6 9 L14 1" fill="none" stroke="#f06020" stroke-width="2"/><text x="1" y="15.5" font-family="Liberation Sans" font-weight="bold" font-size="7.5" fill="#333">abc</text></svg>
<svg class="a" style="left:1455px;top:134px" width="30" height="30" viewBox="0 0 16 16"><path d="M1 3 h6 l2 2 v7 h-8Z" fill="#f4f7fc" stroke="#6a80a8" stroke-width="0.7"/><path d="M2 6h5M2 8h5" stroke="#5a8ae0" stroke-width="0.7"/><path d="M6 6.5 h6 l2 2 v7 h-8Z" fill="#f4f7fc" stroke="#4a70b0" stroke-width="0.8"/><path d="M7 10h6M7 12h6M7 14h6" stroke="#3a7ae0" stroke-width="0.8"/><path d="M9 3 Q12 0 14 3" fill="none" stroke="#f07030" stroke-width="1.2"/></svg>
<div class="a" style="left:96px;top:186px;width:37px;height:185px;background:linear-gradient(90deg,#3b5173,#3f5679);border-right:1px solid #2d4262"></div>
<div class="a" style="left:96px;top:372px;width:37px;height:124px;background:linear-gradient(90deg,#3b5173,#3f5679);border-right:1px solid #2d4262"></div>
<svg class="a" style="left:101px;top:190px" width="28" height="28" viewBox="0 0 16 16"><rect x="8" y="2" width="7" height="9" fill="#dfe8f4" stroke="#8898b0" stroke-width="0.6"/><rect x="2" y="6" width="7" height="9" fill="#e4ecf4" stroke="#8898b0" stroke-width="0.6"/><rect x="9" y="1" width="6" height="6" fill="#3a7ee0"/><rect x="7" y="6" width="6" height="9" fill="#3a80e8"/></svg>
<svg class="a" style="left:101px;top:378px" width="28" height="28" viewBox="0 0 16 16"><path d="M2 2 L14 14" stroke="#d84030" stroke-width="2"/><path d="M14 2 L4 12" stroke="#c8ccd4" stroke-width="2.2"/><circle cx="12" cy="4" r="2.5" fill="none" stroke="#d0d4da" stroke-width="1.5"/><path d="M3 14 L6 11" stroke="#e0e4ea" stroke-width="3"/></svg>
<div class="a t" style="left:123.5px;top:225.5px;font-size:21px;line-height:21px;color:#fff;transform-origin:0 0;transform:rotate(90deg) scaleX(0.9665);">Server Explorer</div>
<div class="a t" style="left:123.5px;top:413px;font-size:21px;line-height:21px;color:#fff;transform-origin:0 0;transform:rotate(90deg) scaleX(1.1052);">Toolbox</div>
<div class="a" style="left:145px;top:184px;width:206px;height:40px;background:linear-gradient(#fffdf6 0,#fff4d4 45%,#ffeab0 100%);border-radius:4px 4px 0 0"></div>
<div class="a t" style="left:152.7px;top:194.40px;font-size:22.2px;line-height:22.2px;color:#111;font-weight:normal;font-family:'Liberation Sans',sans-serif;transform-origin:0 0;transform:scaleX(0.9726);">comperrors.cpp</div>
<svg class="a" style="left:322px;top:199px" width="18" height="17" viewBox="0 0 18 17"><path d="M2 2 L16 15 M16 2 L2 15" stroke="#6a5a38" stroke-width="2.2"/></svg>
<svg class="a" style="left:1265px;top:203px" width="16" height="9" viewBox="0 0 16 9"><path d="M0 0 H16 L8 9Z" fill="#c9d2de"/></svg>
<div class="a" style="left:145px;top:223px;width:1146px;height:8px;background:#ffe8a6;border-radius:0 4px 0 0"></div>
<div class="a" style="left:145px;top:230px;width:1146px;height:88px;background:#2c3f5e"></div>
<div class="a" style="left:146px;top:232px;width:200px;height:38px;background:linear-gradient(#f0f3f7,#e9eef3)"></div>
<svg class="a" style="left:152px;top:244px" width="14" height="14" viewBox="0 0 14 14"><path d="M1 4.5 H6 V1 L13 7 L6 13 V9.5 H1Z" fill="#f0d040" stroke="#7a6020" stroke-width="1"/></svg>
<div class="a t" style="left:174px;top:242.20px;font-size:22.2px;line-height:22.2px;color:#111;font-weight:normal;font-family:'Liberation Sans',sans-serif;transform-origin:0 0;transform:scaleX(0.9154);">_tmain</div>
<svg class="a" style="left:328px;top:251px" width="9" height="5" viewBox="0 0 9 5"><path d="M0 0 H9 L4.5 5Z" fill="#111"/></svg>
<div class="a" style="left:346px;top:232px;width:20px;height:38px;background:#e6eaee;border-left:1px solid #c8ccd2"></div>
<svg class="a" style="left:348px;top:234px" width="16" height="34" viewBox="0 0 16 34"><rect x="0.5" y="0.5" width="15" height="16" fill="#e0e3e6" stroke="#c0c4ca"/><rect x="0.5" y="17.5" width="15" height="16" fill="#e0e3e6" stroke="#c0c4ca"/><path d="M2 9 L8 2 L14 9Z" fill="#5a74b0"/><path d="M2 23 H14 L8 30Z" fill="#5a74b0"/></svg>
<div class="a" style="left:372px;top:232px;width:851px;height:38px;background:linear-gradient(#f0f3f7,#e9eef3)"></div>
<svg class="a" style="left:378px;top:244px" width="14" height="14" viewBox="0 0 14 14"><path d="M1 4.5 H6 V1 L13 7 L6 13 V9.5 H1Z" fill="#f0d040" stroke="#7a6020" stroke-width="1"/></svg>
<div class="a t" style="left:399px;top:242.20px;font-size:22.2px;line-height:22.2px;color:#111;font-weight:normal;font-family:'Liberation Sans',sans-serif;transform-origin:0 0;transform:scaleX(0.9288);">int _tmain(int argc, _TCHAR* argv[])</div>
<svg class="a" style="left:1205px;top:251px" width="9" height="5" viewBox="0 0 9 5"><path d="M0 0 H9 L4.5 5Z" fill="#111"/></svg>
<div class="a" style="left:1227px;top:232px;width:63px;height:38px;background:linear-gradient(#f4f4f4,#dcdcdc);border:1px solid #b0b4ba;border-radius:3px"></div>
<svg class="a" style="left:1229px;top:233px" width="28" height="36" viewBox="0 0 28 36"><defs><linearGradient id="goG" x1="0" y1="0" x2="1" y2="1"><stop offset="0" stop-color="#7ae060"/><stop offset="0.6" stop-color="#3cb830"/><stop offset="1" stop-color="#1e8a1a"/></linearGradient></defs><path d="M10 35 C1 28, 0 14, 13 9 L12 2 L27 11 L15 22 L14 16 C7 19, 8 27, 13 34 Z" fill="url(#goG)" stroke="#1a6e16" stroke-width="0.9" stroke-linejoin="round"/></svg>
<div class="a t" style="left:1254px;top:240.83px;font-size:25px;line-height:25px;color:#404040;font-weight:normal;font-family:'Liberation Sans',sans-serif;transform-origin:0 0;transform:scaleX(0.9895);">Go</div>
<div class="a" style="left:145px;top:269px;width:1146px;height:2px;background:#34476a"></div>
<div class="a" style="left:145px;top:271px;width:1146px;height:3px;background:#e6ebf1"></div>
<div class="a" style="left:147px;top:277px;width:571px;height:39px;background:linear-gradient(#e4e8ee 0,#eef2f6 4px,#eef2f6);border-left:2px solid #c6ccd4"></div>
<div class="a t" style="left:187px;top:286.70px;font-size:22.2px;line-height:22.2px;color:#111;font-weight:normal;font-family:'Liberation Sans',sans-serif;transform-origin:0 0;transform:scaleX(0.9272);">(Global Scope)</div>
<svg class="a" style="left:700px;top:293px" width="11" height="6" viewBox="0 0 11 6"><path d="M0 0 H11 L5.5 6Z" fill="#1a2435"/></svg>
<div class="a" style="left:720px;top:277px;width:570px;height:39px;background:linear-gradient(#e4e8ee 0,#eef2f6 4px,#eef2f6)"></div>
<svg class="a" style="left:1271px;top:293px" width="11" height="6" viewBox="0 0 11 6"><path d="M0 0 H11 L5.5 6Z" fill="#1a2435"/></svg>
<div class="a" style="left:145px;top:315px;width:1146px;height:3px;background:linear-gradient(#4d5f7c,#8a98ac)"></div>
<div class="a" style="left:145px;top:318px;width:1146px;height:281px;background:#fff"></div>
<div class="a" style="left:145px;top:318px;width:29px;height:281px;background:#f0f0f0"></div>
<div class="a" style="left:202px;top:318px;width:2px;height:90px;background:#a0a0a0"></div>
<div class="a" style="left:202px;top:407px;width:8px;height:2px;background:#a0a0a0"></div>
<div class="a" style="left:180px;top:472px;width:9px;height:60px;background:#6ed069"></div>
<svg class="a" style="left:150px;top:572px" width="24" height="9" viewBox="0 0 24 9"><defs><linearGradient id="cm" x1="0" y1="0" x2="0" y2="1"><stop offset="0" stop-color="#b8c8dc"/><stop offset="1" stop-color="#52647e"/></linearGradient></defs><path d="M0 1 H17 L23 8 H0Z" fill="url(#cm)"/></svg>
<div class="a t" style="left:214.00px;top:323.15px;font-size:22px;line-height:22px;color:#0a0ae0;font-weight:normal;font-family:'Liberation Mono',monospace;letter-spacing:-0.03px;-webkit-text-stroke:0.3px #0a0ae0;">#include</div>
<div class="a t" style="left:319.36px;top:323.15px;font-size:22px;line-height:22px;color:#000;font-weight:normal;font-family:'Liberation Mono',monospace;letter-spacing:-0.03px;-webkit-text-stroke:0.3px #000;"> </div>
<div class="a t" style="left:332.53px;top:323.15px;font-size:22px;line-height:22px;color:#a31515;font-weight:normal;font-family:'Liberation Mono',monospace;letter-spacing:-0.03px;-webkit-text-stroke:0.3px #a31515;">"stdafx.h"</div>
<div class="a" style="left:213px;top:410.0px;width:41.51px;height:29px;background:#dff6fc"></div>
<div class="a" style="left:357.87px;top:410.0px;width:41.51px;height:29px;background:#dff6fc"></div>
<div class="a t" style="left:214.00px;top:414.65px;font-size:22px;line-height:22px;color:#0a0ae0;font-weight:normal;font-family:'Liberation Mono',monospace;letter-spacing:-0.03px;-webkit-text-stroke:0.3px #0a0ae0;">int</div>
<div class="a t" style="left:253.51px;top:414.65px;font-size:22px;line-height:22px;color:#000;font-weight:normal;font-family:'Liberation Mono',monospace;letter-spacing:-0.03px;-webkit-text-stroke:0.3px #000;"> </div>
<div class="a t" style="left:266.68px;top:414.65px;font-size:22px;line-height:22px;color:#a0209a;font-weight:normal;font-family:'Liberation Mono',monospace;letter-spacing:-0.03px;-webkit-text-stroke:0.3px #a0209a;">_tmain</div>
<div class="a t" style="left:345.70px;top:414.65px;font-size:22px;line-height:22px;color:#000;font-weight:normal;font-family:'Liberation Mono',monospace;letter-spacing:-0.03px;-webkit-text-stroke:0.3px #000;">(</div>
<div class="a t" style="left:358.87px;top:414.65px;font-size:22px;line-height:22px;color:#0a0ae0;font-weight:normal;font-family:'Liberation Mono',monospace;letter-spacing:-0.03px;-webkit-text-stroke:0.3px #0a0ae0;">int</div>
<div class="a t" style="left:398.38px;top:414.65px;font-size:22px;line-height:22px;color:#000;font-weight:normal;font-family:'Liberation Mono',monospace;letter-spacing:-0.03px;-webkit-text-stroke:0.3px #000;"> argc, </div>
<div class="a t" style="left:490.57px;top:414.65px;font-size:22px;line-height:22px;color:#0a0ae0;font-weight:normal;font-family:'Liberation Mono',monospace;letter-spacing:-0.03px;-webkit-text-stroke:0.3px #0a0ae0;">_TCHAR</div>
<div class="a t" style="left:569.59px;top:414.65px;font-size:22px;line-height:22px;color:#000;font-weight:normal;font-family:'Liberation Mono',monospace;letter-spacing:-0.03px;-webkit-text-stroke:0.3px #000;">* argv[])</div>
<div class="a t" style="left:214.00px;top:445.35px;font-size:22px;line-height:22px;color:#000;font-weight:normal;font-family:'Liberation Mono',monospace;letter-spacing:-0.03px;-webkit-text-stroke:0.3px #000;">{</div>
<div class="a t" style="left:214.00px;top:476.15px;font-size:22px;line-height:22px;color:#000;font-weight:normal;font-family:'Liberation Mono',monospace;letter-spacing:-0.03px;-webkit-text-stroke:0.3px #000;">    </div>
<div class="a t" style="left:266.68px;top:476.15px;font-size:22px;line-height:22px;color:#1a1aa8;font-weight:normal;font-family:'Liberation Mono',monospace;letter-spacing:-0.03px;-webkit-text-stroke:0.3px #1a1aa8;">return</div>
<div class="a t" style="left:345.70px;top:476.15px;font-size:22px;line-height:22px;color:#000;font-weight:normal;font-family:'Liberation Mono',monospace;letter-spacing:-0.03px;-webkit-text-stroke:0.3px #000;"> 0;</div>
<div class="a" style="left:1260px;top:318px;width:31px;height:281px;background:linear-gradient(90deg,#e2e2e2,#eeeeee 50%,#e6e6e6)"></div>
<div class="a" style="left:1261px;top:319px;width:29px;height:31px;background:linear-gradient(#e4e8ee,#cdd4de);border:1px solid #b8c0cc"></div>
<svg class="a" style="left:1264px;top:322px" width="24" height="25" viewBox="0 0 24 25"><path d="M12 1 L7 7 H17Z M12 24 L7 18 H17Z" fill="#111"/><path d="M11 6 V10 M11 15 V19 M13 6 V10 M13 15 V19" stroke="#111" stroke-width="2"/><path d="M2 11.5 H22 M2 13.5 H22" stroke="#111" stroke-width="1.5"/></svg>
<svg class="a" style="left:1268px;top:360px" width="14" height="7" viewBox="0 0 14 7"><path d="M0 7 L7 0 L14 7Z" fill="#b8b8b8"/></svg>
<div class="a" style="left:1263px;top:408px;width:26px;height:82px;background:linear-gradient(90deg,#f4f4f4,#e6e6e6 50%,#cfcfcf);border:2px solid #a8a8a8;border-radius:4px"></div>
<svg class="a" style="left:1268px;top:441px" width="16" height="15" viewBox="0 0 16 15"><path d="M1 2.5 H15 M1 7.5 H15 M1 12.5 H15" stroke="#222" stroke-width="2"/></svg>
<svg class="a" style="left:1268px;top:577px" width="14" height="7" viewBox="0 0 14 7"><path d="M0 0 H14 L7 7Z" fill="#808080"/></svg>
<div class="a" style="left:145px;top:599px;width:1115px;height:30px;background:linear-gradient(#efefef,#f3f3f3 50%,#ececec)"></div>
<div class="a" style="left:146px;top:599px;width:107px;height:30px;background:#fff;border-right:1px solid #e0e0e0"></div>
<div class="a t" style="left:153px;top:604.70px;font-size:22.2px;line-height:22.2px;color:#111;font-weight:normal;font-family:'Liberation Sans',sans-serif;transform-origin:0 0;transform:scaleX(0.9055);">100 %</div>
<svg class="a" style="left:236px;top:613px" width="11" height="6" viewBox="0 0 11 6"><path d="M0 0 H11 L5.5 6Z" fill="#1a2435"/></svg>
<svg class="a" style="left:264px;top:607px" width="8" height="14" viewBox="0 0 8 14"><path d="M8 0 V14 L0 7Z" fill="#909090"/></svg>
<svg class="a" style="left:1238px;top:607px" width="8" height="14" viewBox="0 0 8 14"><path d="M0 0 V14 L8 7Z" fill="#707070"/></svg>
<div class="a" style="left:1260px;top:599px;width:31px;height:30px;background:#fff"></div>
<div class="a" style="left:145px;top:629px;width:1146px;height:8px;background:#ffe8a6;border-radius:0 0 4px 4px"></div>
<div class="a" style="left:1302px;top:184px;width:502px;height:37px;background:linear-gradient(#4c6185,#3f5579 60%,#3a5075);border-radius:4px 4px 0 0"></div>
<div class="a t" style="left:1306px;top:192.70px;font-size:22.2px;line-height:22.2px;color:#ffffff;font-weight:normal;font-family:'Liberation Sans',sans-serif;transform-origin:0 0;transform:scaleX(0.9523);">Solution Explorer</div>
<svg class="a" style="left:1718px;top:198.5px" width="15" height="8" viewBox="0 0 15 8"><path d="M0 0 H15 L7.5 8Z" fill="#d8dfe8"/></svg>
<svg class="a" style="left:1748px;top:192.5px" width="15" height="20" viewBox="0 0 15 20"><path d="M4 1.5 H11 M5 1.5 V10 M10 1.5 V10 M2 10.5 H13 M7.5 10.5 V19" stroke="#eef2f6" stroke-width="2"/></svg>
<svg class="a" style="left:1776px;top:194.5px" width="18" height="16" viewBox="0 0 18 16"><path d="M1.5 1 L16.5 15 M16.5 1 L1.5 15" stroke="#eef2f6" stroke-width="2.2"/></svg>
<div class="a" style="left:1302px;top:221px;width:502px;height:47px;background:#bccbde"></div>
<svg class="a" style="left:1314px;top:229px" width="30" height="30" viewBox="0 0 16 16"><rect x="1" y="1" width="9" height="9" fill="#f2efe0" stroke="#a0a080" stroke-width="0.6"/><rect x="1" y="1" width="9" height="2" fill="#e8c860"/><path d="M2 4.5h6M2 6.5h6M2 8.5h6" stroke="#8a8a70" stroke-width="0.5"/><rect x="5" y="8" width="10" height="7" fill="#eef2f8" stroke="#5a6a88" stroke-width="0.7"/><path d="M6.5 10h1M8.5 10h5M6.5 12.5h1M8.5 12.5h5" stroke="#3a4a68" stroke-width="1"/></svg>
<div class="a" style="left:1355px;top:231px;width:1px;height:29px;background:#7d8ca2;box-shadow:1px 0 0 #dfe6ef"></div>
<svg class="a" style="left:1367px;top:229px" width="30" height="30" viewBox="0 0 16 16"><path d="M1 1 h7 v9 h-7Z" fill="#f8f8f8" stroke="#a0a0a0" stroke-width="0.5" stroke-dasharray="1 0.5"/><path d="M8 3 h5 l2 2 v7 h-7Z" fill="#f0dc90" stroke="#706030" stroke-width="0.7"/><path d="M4 6 h6 l1.5 1.5 v8 h-7.5Z" fill="#e8eef8" stroke="#4a6aa8" stroke-width="0.8"/><path d="M5 10h5M5 12h5M5 14h5" stroke="#5a7ab8" stroke-width="0.7"/></svg>
<div class="a" style="left:1407px;top:231px;width:1px;height:29px;background:#7d8ca2;box-shadow:1px 0 0 #dfe6ef"></div>
<svg class="a" style="left:1421px;top:229px" width="30" height="30" viewBox="0 0 16 16"><rect x="1.5" y="2" width="12" height="12" fill="#f8f6ec" stroke="#5a5a50" stroke-width="1"/><path d="M3.5 5h3M5 7.5h3M6 10h3M3.5 12h4" stroke="#2a5ad8" stroke-width="1.1"/><path d="M8 5h4M9.5 7.5h3" stroke="#a0a0a0" stroke-width="0.8"/></svg>
<svg class="a" style="left:1460px;top:229px" width="30" height="30" viewBox="0 0 16 16"><rect x="6" y="0.5" width="6" height="4" rx="1.5" fill="#a8c4ec" stroke="#3a6ac0" stroke-width="0.7"/><rect x="0.5" y="8" width="6" height="4" rx="1.5" fill="#a8c4ec" stroke="#3a6ac0" stroke-width="0.7"/><path d="M9 4.5 V6 H3.5 V8" fill="none" stroke="#3a6ac0" stroke-width="0.8"/><circle cx="10" cy="10" r="3.3" fill="#e4eef8" stroke="#6a7a90" stroke-width="1"/><circle cx="14" cy="14" r="1.7" fill="#e0a030"/></svg>
<div class="a" style="left:1302px;top:268px;width:502px;height:131px;background:#fff"></div>
<svg class="a" style="left:1314px;top:275px" width="21" height="21" viewBox="0 0 16 16"><rect x="1" y="1" width="14" height="14" fill="#f4f6fb" stroke="#6a80a8" stroke-width="0.8"/><rect x="1" y="1" width="14" height="2" fill="#4a80d8"/><path d="M2 12 C2 8,6 8,8 11 C10 14,14 14,14 11 C14 8,10 8,8 11 C6 14,2 14,2 12Z" fill="none" stroke="#5a4ad8" stroke-width="1.6"/></svg>
<div class="a t" style="left:1340.5px;top:275.80px;font-size:21.5px;line-height:21.5px;color:#111;font-weight:normal;font-family:'Liberation Sans',sans-serif;transform-origin:0 0;transform:scaleX(1.0103);">Solution 'comperrors' (1 project)</div>
<svg class="a" style="left:1312px;top:315px" width="9" height="9" viewBox="0 0 9 9"><path d="M9 0 V9 H0Z" fill="#333"/></svg>
<div class="a" style="left:1336px;top:303px;width:147px;height:33px;background:linear-gradient(#fafafa,#ececec);border:1px solid #d8d8d8;border-radius:3px"></div>
<svg class="a" style="left:1340px;top:306px" width="21" height="21" viewBox="0 0 16 16"><rect x="2" y="1" width="13" height="13" fill="#f4f6fb" stroke="#5a6a88" stroke-width="0.8"/><rect x="2" y="1" width="13" height="2" fill="#2a60c8"/><path d="M7 4 L8 6 L10 6.5 L8 7 L7 9 L6 7 L4 6.5 L6 6Z" fill="#e8c030"/><path d="M11 5 L11.6 6.4 L13 7 L11.6 7.6 L11 9 L10.4 7.6 L9 7 L10.4 6.4Z" fill="#e8c030"/><circle cx="5" cy="12" r="2.8" fill="#3a9a50"/><circle cx="5" cy="12" r="1.5" fill="#5ab0e0"/><path d="M0.5 12 L2 10.8 M0.5 12 L2 13.2 M9.5 12 L8 10.8 M9.5 12 L8 13.2" stroke="#333" stroke-width="0.6"/></svg>
<div class="a t" style="left:1363px;top:308.84px;font-size:21.8px;line-height:21.8px;color:#000;font-weight:bold;font-family:'Liberation Sans',sans-serif;transform-origin:0 0;transform:scaleX(0.9607);">comperrors</div>
<svg class="a" style="left:1337px;top:347px" width="7" height="11" viewBox="0 0 7 11"><path d="M1 1 L6 5.5 L1 10" fill="none" stroke="#b0b0b0" stroke-width="1.2"/></svg>
<svg class="a" style="left:1359px;top:342px" width="22" height="22" viewBox="0 0 16 16"><path d="M2 2 h5 l1 1 h7 v10 H2Z" fill="#e8c050" stroke="#a08020" stroke-width="0.6"/><rect x="2" y="5" width="13" height="8" fill="#f8d060"/><rect x="0.5" y="9" width="6" height="6" fill="#fff" stroke="#333" stroke-width="0.8"/><path d="M2 13.5 L5 10.5 M3 10.5 H5 V12.5" stroke="#111" stroke-width="0.9" fill="none"/></svg>
<div class="a t" style="left:1387px;top:342.70px;font-size:22.2px;line-height:22.2px;color:#111;font-weight:normal;font-family:'Liberation Sans',sans-serif;transform-origin:0 0;transform:scaleX(0.9179);">External Dependencies</div>
<svg class="a" style="left:1335px;top:381px" width="9" height="9" viewBox="0 0 9 9"><path d="M9 0 V9 H0Z" fill="#333"/></svg>
<svg class="a" style="left:1360px;top:375px" width="21" height="21" viewBox="0 0 16 16"><path d="M1 3 h5 l1 1.5 h7 v9 H1Z" fill="#e8c050" stroke="#a08020" stroke-width="0.6"/><path d="M1 13.5 L3 7 H15.5 L13.5 13.5Z" fill="#fbd86a" stroke="#b08828" stroke-width="0.6"/></svg>
<div class="a t" style="left:1387px;top:375.40px;font-size:22.2px;line-height:22.2px;color:#111;font-weight:normal;font-family:'Liberation Sans',sans-serif;transform-origin:0 0;transform:scaleX(0.9018);">Header Files</div>
<div class="a" style="left:1772px;top:268px;width:32px;height:131px;background:linear-gradient(90deg,#e4e4e4,#f0f0f0)"></div>
<svg class="a" style="left:1781px;top:282px" width="14" height="7" viewBox="0 0 14 7"><path d="M0 7 L7 0 L14 7Z" fill="#333"/></svg>
<div class="a" style="left:1773px;top:301px;width:29px;height:29px;background:linear-gradient(90deg,#f6f6f6,#e2e2e2);border:1px solid #a0a0a0;border-radius:3px"></div>
<svg class="a" style="left:1779px;top:308px" width="17" height="15" viewBox="0 0 17 15"><path d="M1 2 H16 M1 7.5 H16 M1 13 H16" stroke="#333" stroke-width="2"/></svg>
<svg class="a" style="left:1781px;top:380px" width="14" height="7" viewBox="0 0 14 7"><path d="M0 0 H14 L7 7Z" fill="#333"/></svg>
<div class="a" style="left:1302px;top:399px;width:175px;height:37px;background:#fff;border-radius:0 0 4px 4px"></div>
<svg class="a" style="left:1311px;top:403px" width="29" height="29" viewBox="0 0 16 16"><rect x="5" y="1" width="10.5" height="10" fill="#eef3fa" stroke="#6a80a8" stroke-width="0.7"/><rect x="5" y="1" width="10.5" height="2" fill="#3f7fdc"/><path d="M0.5 5 h4 l1 1 h4 v5 h-9Z" fill="#e8c050"/><circle cx="9" cy="10" r="3" fill="#d8e8f8" stroke="#607090" stroke-width="1"/><path d="M11 12 L14 15" stroke="#c08820" stroke-width="2"/></svg>
<div class="a t" style="left:1348px;top:407.70px;font-size:22.2px;line-height:22.2px;color:#111;font-weight:normal;font-family:'Liberation Sans',sans-serif;transform-origin:0 0;transform:scaleX(0.9174);">Solution Ex...</div>
<svg class="a" style="left:1486px;top:404px" width="29" height="29" viewBox="0 0 16 16"><rect x="1" y="1" width="12" height="12" fill="#eef3fa" stroke="#6a80a8" stroke-width="0.7"/><rect x="1" y="1" width="12" height="2" fill="#3f7fdc"/><rect x="8" y="7" width="2.5" height="8" rx="1" fill="#2e70d8"/><rect x="10.5" y="6" width="2.5" height="9" rx="1" fill="#f0b020"/><rect x="12.5" y="8" width="2.5" height="7" rx="1" fill="#e05028"/><rect x="11" y="9" width="2.5" height="7" rx="1" fill="#30a040"/></svg>
<div class="a t" style="left:1523.4px;top:407.70px;font-size:22.2px;line-height:22.2px;color:#f4f6f8;font-weight:normal;font-family:'Liberation Sans',sans-serif;transform-origin:0 0;transform:scaleX(0.9088);">Team Expl...</div>
<svg class="a" style="left:1661px;top:404px" width="29" height="29" viewBox="0 0 16 16"><rect x="1" y="2" width="12" height="9" fill="#eef3fa" stroke="#7a8aa8" stroke-width="0.7"/><path d="M2 6 L6 2.5 L8.5 5 L4.5 8.5Z" fill="#f0c030" stroke="#a08020" stroke-width="0.5"/><path d="M9 6 L12 4 L14.5 7 L11.5 9Z" fill="#d858d0"/><path d="M9 11 L12 9 L14.5 12 L11.5 14.5Z" fill="#3a80e0"/></svg>
<div class="a t" style="left:1697.5px;top:407.70px;font-size:22.2px;line-height:22.2px;color:#f4f6f8;font-weight:normal;font-family:'Liberation Sans',sans-serif;transform-origin:0 0;transform:scaleX(0.8912);">Class View</div>
<div class="a" style="left:1302px;top:448px;width:502px;height:37px;background:linear-gradient(#4c6185,#3f5579 60%,#3a5075);border-radius:4px 4px 0 0"></div>
<div class="a t" style="left:1306px;top:456.70px;font-size:22.2px;line-height:22.2px;color:#ffffff;font-weight:normal;font-family:'Liberation Sans',sans-serif;transform-origin:0 0;transform:scaleX(0.9685);">Properties</div>
<svg class="a" style="left:1718px;top:462.5px" width="15" height="8" viewBox="0 0 15 8"><path d="M0 0 H15 L7.5 8Z" fill="#d8dfe8"/></svg>
<svg class="a" style="left:1748px;top:456.5px" width="15" height="20" viewBox="0 0 15 20"><path d="M4 1.5 H11 M5 1.5 V10 M10 1.5 V10 M2 10.5 H13 M7.5 10.5 V19" stroke="#eef2f6" stroke-width="2"/></svg>
<svg class="a" style="left:1776px;top:458.5px" width="18" height="16" viewBox="0 0 18 16"><path d="M1.5 1 L16.5 15 M16.5 1 L1.5 15" stroke="#eef2f6" stroke-width="2.2"/></svg>
<div class="a" style="left:1302px;top:485px;width:502px;height:43px;background:#fff;border-top:2px solid #e8e8e8"></div>
<div class="a" style="left:1787px;top:491px;width:15px;height:34px;background:#ececec"></div>
<svg class="a" style="left:1790px;top:505px" width="9" height="5" viewBox="0 0 9 5"><path d="M0 0 H9 L4.5 5Z" fill="#111"/></svg>
<div class="a" style="left:1302px;top:528px;width:502px;height:32px;background:#bccbde"></div>
<div class="a" style="left:1306px;top:530px;width:30px;height:29px;background:#fff0c0;border:1px solid #e8c870"></div>
<svg class="a" style="left:1309px;top:532px" width="25" height="25" viewBox="0 0 16 16"><rect x="1" y="2" width="4" height="4" fill="#fff" stroke="#405080" stroke-width="0.7"/><rect x="1" y="9" width="4" height="4" fill="#fff" stroke="#405080" stroke-width="0.7"/><path d="M2 4h2M3 3v2M2 11h2M3 10v2" stroke="#111" stroke-width="0.6"/><path d="M7 3h7M7 5h7M7 7h7M7 10h7M7 12h7" stroke="#7080a0" stroke-width="0.7"/></svg>
<svg class="a" style="left:1338px;top:531px" width="22" height="26" viewBox="0 0 22 26"><text x="1" y="11" font-family="Liberation Serif" font-size="11" fill="#3050c0">A</text><text x="1" y="24" font-family="Liberation Serif" font-size="11" fill="#c03030">Z</text><path d="M15 2 V22 M12 18 L15 23 L18 18" stroke="#111" stroke-width="1.6" fill="none"/></svg>
<div class="a" style="left:1364px;top:533px;width:1px;height:24px;background:#8090a8"></div>
<svg class="a" style="left:1372px;top:533px" width="22" height="20" viewBox="0 0 22 20"><rect x="1" y="2" width="18" height="15" fill="#e2e4e6" stroke="#a8acb0" stroke-width="1"/><rect x="1" y="2" width="18" height="3" fill="#c8ccd0"/><path d="M4 10h10M4 13h6" stroke="#b0b4b8" stroke-width="1"/></svg>
<div class="a" style="left:1302px;top:560px;width:502px;height:22px;background:#fff"></div>
<div class="a" style="left:1302px;top:582px;width:502px;height:2px;background:#a2a6aa"></div>
<div class="a" style="left:1302px;top:584px;width:502px;height:3px;background:#dde0e4"></div>
<div class="a" style="left:1302px;top:587px;width:502px;height:49px;background:#dfe2e6;border-top:1px solid #a0a0a0"></div>
<div class="a" style="left:145px;top:648px;width:1668px;height:37px;background:linear-gradient(#4c6185,#3f5579 60%,#3a5075);border-radius:4px 4px 0 0"></div>
<div class="a t" style="left:149.5px;top:657.60px;font-size:22.2px;line-height:22.2px;color:#ffffff;font-weight:normal;font-family:'Liberation Sans',sans-serif;transform-origin:0 0;transform:scaleX(1.0129);">Output</div>
<svg class="a" style="left:1728px;top:662.5px" width="15" height="8" viewBox="0 0 15 8"><path d="M0 0 H15 L7.5 8Z" fill="#d8dfe8"/></svg>
<svg class="a" style="left:1758px;top:656.5px" width="15" height="20" viewBox="0 0 15 20"><path d="M4 1.5 H11 M5 1.5 V10 M10 1.5 V10 M2 10.5 H13 M7.5 10.5 V19" stroke="#eef2f6" stroke-width="2"/></svg>
<svg class="a" style="left:1786px;top:658.5px" width="18" height="16" viewBox="0 0 18 16"><path d="M1.5 1 L16.5 15 M16.5 1 L1.5 15" stroke="#eef2f6" stroke-width="2.2"/></svg>
<div class="a" style="left:145px;top:685px;width:1668px;height:47px;background:#bccbde"></div>
<div class="a" style="left:1804px;top:685px;width:9px;height:47px;background:#fff"></div>
<div class="a t" style="left:157.6px;top:698.70px;font-size:22.2px;line-height:22.2px;color:#1e2a3a;font-weight:normal;font-family:'Liberation Sans',sans-serif;transform-origin:0 0;transform:scaleX(0.9991);">Show output from:</div>
<div class="a" style="left:349px;top:692px;width:539px;height:34px;background:#eef2f7;border:1px solid #8e9db3;border-radius:2px"></div>
<div class="a t" style="left:357px;top:699.60px;font-size:22.2px;line-height:22.2px;color:#111;font-weight:normal;font-family:'Liberation Sans',sans-serif;transform-origin:0 0;transform:scaleX(0.9055);">Build</div>
<svg class="a" style="left:872px;top:708px" width="11" height="6" viewBox="0 0 11 6"><path d="M0 0 H11 L5.5 6Z" fill="#1a2435"/></svg>
<div class="a" style="left:901px;top:693px;width:1px;height:32px;background:#7d8ca2;box-shadow:1px 0 0 #dfe6ef"></div>
<div class="a" style="left:954px;top:693px;width:1px;height:32px;background:#7d8ca2;box-shadow:1px 0 0 #dfe6ef"></div>
<div class="a" style="left:1046px;top:693px;width:1px;height:32px;background:#7d8ca2;box-shadow:1px 0 0 #dfe6ef"></div>
<div class="a" style="left:1099px;top:693px;width:1px;height:32px;background:#7d8ca2;box-shadow:1px 0 0 #dfe6ef"></div>
<svg class="a" style="left:913px;top:694px" width="28" height="28" viewBox="0 0 16 16"><path d="M4 1 h6 l2 2 v10 h-8Z" fill="#f4f6fa" stroke="#6a7a98" stroke-width="0.7"/><path d="M5 5h5M5 7h5" stroke="#30b040" stroke-width="0.9"/><path d="M8 6 L4 10 H6.5 V15 H9.5 V10 H12Z" fill="#40a040" stroke="#207020" stroke-width="0.5"/></svg>
<svg class="a" style="left:967px;top:694px" width="28" height="28" viewBox="0 0 16 16"><path d="M6 1 h6 l2 2 v8 h-8Z" fill="#f4f6fa" stroke="#6a7a98" stroke-width="0.7"/><path d="M7.5 5h5M7.5 7h5" stroke="#30b040" stroke-width="0.9"/><path d="M0.5 11 L5 7 V9.5 H11 V12.5 H5 V15Z" fill="#40a040" stroke="#207020" stroke-width="0.5"/></svg>
<svg class="a" style="left:1007px;top:694px" width="28" height="28" viewBox="0 0 16 16"><path d="M1 1 h6 l2 2 v8 h-8Z" fill="#f4f6fa" stroke="#6a7a98" stroke-width="0.7"/><path d="M2.5 5h5M2.5 7h5" stroke="#30b040" stroke-width="0.9"/><path d="M15.5 11 L11 7 V9.5 H5 V12.5 H11 V15Z" fill="#40a040" stroke="#207020" stroke-width="0.5"/></svg>
<svg class="a" style="left:1059px;top:694px" width="28" height="28" viewBox="0 0 16 16"><path d="M1 3h11M1 5.5h11M1 8h9M1 10.5h7" stroke="#8a98aa" stroke-width="1"/><path d="M8 8 L14 15 M14 8 L8 15" stroke="#e84820" stroke-width="2.2"/></svg>
<svg class="a" style="left:1112px;top:694px" width="28" height="28" viewBox="0 0 16 16"><rect x="1" y="2" width="14" height="12" fill="#f8fbff" stroke="#3a5a98" stroke-width="0.8"/><rect x="1" y="2" width="14" height="2" fill="#3f7fdc"/><path d="M12 6 V10 H5" fill="none" stroke="#111" stroke-width="1.4"/><path d="M3 10 L6 7.5 V12.5Z" fill="#111"/></svg>
<div class="a" style="left:145px;top:732px;width:1668px;height:216px;background:#fff"></div>
<div class="a" style="left:145px;top:732px;width:1637px;height:40px;overflow:hidden">
<div class="a t" style="left:15.5px;top:-8.32px;font-size:20px;line-height:20px;color:#111;font-weight:normal;font-family:'Liberation Mono',monospace;-webkit-text-stroke:0.25px #111;">lwayscreate' was specified.</div>
</div>
<div class="a" style="left:163px;top:834px;width:695px;height:29px;background:#3232c4"></div>
<div class="a" style="left:858px;top:834px;width:731px;height:29px;background:#6f78d0"></div>
<div class="a" style="left:1588px;top:834px;width:144px;height:29px;background:#3232c4"></div>
<div class="a t" style="left:163px;top:839.18px;font-size:20px;line-height:20px;color:#fff;font-weight:normal;font-family:'Liberation Mono',monospace;-webkit-text-stroke:0.2px #fff;transform-origin:0 0;transform:scaleX(0.9980);">tal error C1075: end of file found before the left brace '{' at 'e:\myprojects\comperrors\comperrors\comperrors.cpp(8)' was matched</div>
<div class="a" style="left:1782px;top:732px;width:31px;height:216px;background:linear-gradient(90deg,#e6e6e6,#f2f2f2)"></div>
<svg class="a" style="left:1790px;top:743px" width="14" height="7" viewBox="0 0 14 7"><path d="M0 7 L7 0 L14 7Z" fill="#707070"/></svg>
<div class="a" style="left:1784px;top:790px;width:27px;height:53px;background:linear-gradient(90deg,#f6f6f6,#e4e4e4 60%,#d4d4d4);border:2px solid #a8a8a8;border-radius:4px"></div>
<svg class="a" style="left:1790px;top:809px" width="16" height="15" viewBox="0 0 16 15"><path d="M1 2.5 H15 M1 7.5 H15 M1 12.5 H15" stroke="#222" stroke-width="2"/></svg>
<svg class="a" style="left:1790px;top:927px" width="14" height="7" viewBox="0 0 14 7"><path d="M0 0 H14 L7 7Z" fill="#707070"/></svg>
<div class="a" style="left:145px;top:948px;width:1637px;height:31px;background:linear-gradient(#e2e2e2,#efefef 40%,#ececec)"></div>
<svg class="a" style="left:156px;top:956px" width="8" height="14" viewBox="0 0 8 14"><path d="M8 0 V14 L0 7Z" fill="#808080"/></svg>
<div class="a" style="left:605px;top:950px;width:952px;height:27px;background:linear-gradient(#f0f1f0 0,#eceeec 50%,#d2d4d4 55%,#c8caca 100%);border:2px solid #9a9a9a;border-radius:4px"></div>
<svg class="a" style="left:1073px;top:955px" width="16" height="16" viewBox="0 0 16 16"><path d="M3 1 V15 M8 1 V15 M13 1 V15" stroke="#222" stroke-width="2.2"/></svg>
<svg class="a" style="left:1761px;top:956px" width="8" height="14" viewBox="0 0 8 14"><path d="M0 0 V14 L8 7Z" fill="#808080"/></svg>
<div class="a" style="left:1782px;top:948px;width:31px;height:31px;background:#fff"></div>
<div class="a t" style="left:104px;top:1002.70px;font-size:22.2px;line-height:22.2px;color:#f0f4f8;font-weight:normal;font-family:'Liberation Sans',sans-serif;transform-origin:0 0;transform:scaleX(0.9116);">Ready</div>
<div class="a t" style="left:1186.5px;top:1002.70px;font-size:22.2px;line-height:22.2px;color:#f0f4f8;font-weight:normal;font-family:'Liberation Sans',sans-serif;transform-origin:0 0;transform:scaleX(0.9142);">Ln 8</div>
<div class="a t" style="left:1352px;top:1002.70px;font-size:22.2px;line-height:22.2px;color:#f0f4f8;font-weight:normal;font-family:'Liberation Sans',sans-serif;transform-origin:0 0;transform:scaleX(0.9570);">Col 2</div>
<div class="a t" style="left:1518px;top:1002.70px;font-size:22.2px;line-height:22.2px;color:#f0f4f8;font-weight:normal;font-family:'Liberation Sans',sans-serif;transform-origin:0 0;transform:scaleX(0.9170);">Ch 2</div>
<div class="a t" style="left:1762.6px;top:1002.70px;font-size:22.2px;line-height:22.2px;color:#f0f4f8;font-weight:normal;font-family:'Liberation Sans',sans-serif;transform-origin:0 0;transform:scaleX(0.8863);">INS</div>
<div class="a" style="left:200px;top:1036px;width:60px;height:42px;background:linear-gradient(#5e5750,#3c352f 55%,#2e2823);border:1px solid #8a827a;border-radius:3px;box-shadow:inset 0 1px 0 rgba(255,255,255,0.25)"></div>
<div class="a" style="left:654px;top:1036px;width:60px;height:42px;background:linear-gradient(#5e5750,#3c352f 55%,#2e2823);border:1px solid #8a827a;border-radius:3px;box-shadow:inset 0 1px 0 rgba(255,255,255,0.25)"></div>
<div class="a" style="left:719px;top:1036px;width:54px;height:42px;background:linear-gradient(#5e5750,#3c352f 55%,#2e2823);border:1px solid #8a827a;border-radius:3px;box-shadow:inset 0 1px 0 rgba(255,255,255,0.25)"></div>
<div class="a" style="left:774px;top:1038px;width:3px;height:38px;background:#4a443e;border-radius:0 2px 2px 0"></div>
<div class="a" style="left:783px;top:1036px;width:60px;height:42px;background:linear-gradient(#9a958f,#75706a 50%,#5c5751);border:1px solid #b8b2aa;border-radius:3px;box-shadow:inset 0 1px 0 rgba(255,255,255,0.25)"></div>
<div class="a" style="left:848px;top:1036px;width:60px;height:42px;background:linear-gradient(#5e5750,#3c352f 55%,#2e2823);border:1px solid #8a827a;border-radius:3px;box-shadow:inset 0 1px 0 rgba(255,255,255,0.25)"></div>
<div class="a" style="left:913px;top:1036px;width:60px;height:42px;background:linear-gradient(90deg,#e8e020 0,#d8d018 60%,#4a4038 62%,#3a322a);border:1px solid #a09850;border-radius:3px;box-shadow:inset 0 1px 0 rgba(255,255,255,0.25)"></div>
<div class="a" style="left:978px;top:1036px;width:60px;height:42px;background:linear-gradient(#5e5750,#3c352f 55%,#2e2823);border:1px solid #8a827a;border-radius:3px;box-shadow:inset 0 1px 0 rgba(255,255,255,0.25)"></div>
<div class="a" style="left:113px;top:1025px;width:62px;height:62px;border-radius:50%;background:radial-gradient(circle at 50% 90%,#40c8ff 0,#1a80d0 35%,#0a4a90 70%,#1a3a60 100%);border:1px solid #6a8aa8;box-shadow:0 0 3px #000"></div>
<div class="a" style="left:118px;top:1027px;width:52px;height:28px;border-radius:50% 50% 45% 45%;background:linear-gradient(rgba(255,255,255,0.55),rgba(255,255,255,0.08))"></div>
<svg class="a" style="left:124px;top:1033px" width="42" height="38" viewBox="0 0 40 38"><path d="M4 7 Q10 2 19 5 L16 18 Q9 15 2 19Z" fill="#f0622a"/><path d="M21 5 Q29 9 39 4 L36 17 Q27 21 18 18Z" fill="#7cc030"/><path d="M2 21 Q9 17 16 20 L13 33 Q6 30 -1 34Z" fill="#30a8f0"/><path d="M18 20 Q27 23 36 19 L33 32 Q24 36 15 33Z" fill="#f8c428"/></svg>
<svg class="a" style="left:213px;top:1040px" width="34" height="34" viewBox="0 0 34 34"><circle cx="18" cy="15" r="11" fill="#2a70c8"/><circle cx="20" cy="12" r="6" fill="#6ac0f0"/><path d="M6 8 Q1 19 8 27 Q17 34 27 27 Q32 21 31 14 Q29 24 19 25 Q10 24 10 16 Q11 11 15 9 Q12 5 9 5 Q8 7 6 8Z" fill="#e8701a"/><path d="M8 27 Q17 33 27 27 Q20 30 12 26Z" fill="#c04a10"/><path d="M6 8 Q9 4 13 6 L11 10Z" fill="#f8a040"/></svg>
<svg class="a" style="left:281px;top:1043px" width="29" height="28" viewBox="0 0 29 28"><rect x="1" y="1" width="27" height="26" rx="2" fill="#2a92d6" stroke="#104070" stroke-width="1"/><path d="M2 22 H7 Q10 22 12 14 Q15 6 21 5 Q17 10 19 22 H27" fill="none" stroke="#0a2a50" stroke-width="1.8"/></svg>
<svg class="a" style="left:344px;top:1041px" width="30" height="32" viewBox="0 0 30 32"><path d="M2 4 L22 2 L24 30 L4 30Z" fill="#ece8f4" stroke="#a09ab0" stroke-width="0.8"/><path d="M4 20 L22 14 L23 30 L5 30Z" fill="#8a5aa8"/><text x="13" y="29" font-family="Liberation Sans" font-weight="bold" font-size="11" fill="#fff">4</text><circle cx="22" cy="7" r="6" fill="#e8401a"/><circle cx="21" cy="5" r="2.5" fill="#f8b090"/></svg>
<svg class="a" style="left:409px;top:1041px" width="28" height="32" viewBox="0 0 28 32"><path d="M4 1 H19 L26 8 V31 H4Z" fill="#eef4fc" stroke="#8aa0c0" stroke-width="0.8"/><circle cx="15" cy="14" r="6" fill="#c0e4f8" stroke="#6a8aa8" stroke-width="1.5"/><path d="M10 19 L3 27" stroke="#c09040" stroke-width="3"/></svg>
<svg class="a" style="left:474px;top:1041px" width="28" height="32" viewBox="0 0 28 32"><circle cx="11" cy="11" r="9" fill="#f0f0f0" stroke="#e04040" stroke-width="1.5"/><path d="M9 5 L18 22 M17 5 L10 22" stroke="#555" stroke-width="1.5"/><circle cx="9" cy="26" r="3.5" fill="none" stroke="#2a80d0" stroke-width="2"/><circle cx="21" cy="26" r="3.5" fill="none" stroke="#2a80d0" stroke-width="2"/></svg>
<svg class="a" style="left:539px;top:1041px" width="30" height="32" viewBox="0 0 30 32"><rect x="4" y="2" width="22" height="18" fill="#1a50c8" stroke="#8aa0c0" stroke-width="1.2"/><path d="M5 3 L25 3 L5 18Z" fill="#4a90f0"/><rect x="10" y="20" width="10" height="4" fill="#d0d4d8"/><circle cx="22" cy="25" r="6" fill="#e8f0e8" stroke="#a0a8a0" stroke-width="0.8"/><path d="M19 25 H25 M23 23 L25 25 L23 27" stroke="#30a040" stroke-width="1.2" fill="none"/></svg>
<svg class="a" style="left:604px;top:1041px" width="30" height="32" viewBox="0 0 30 32"><rect x="8" y="2" width="20" height="22" fill="#e8eef4" stroke="#6a7a90" stroke-width="1"/><path d="M12 6h3M18 6h3M12 11h3M18 11h3M12 16h3M18 16h3" stroke="#222" stroke-width="1.5"/><circle cx="9" cy="15" r="7" fill="#40b0e0" stroke="#2a5a80" stroke-width="1"/><path d="M12 21 L20 29" stroke="#2a4aa0" stroke-width="3"/></svg>
<svg class="a" style="left:668px;top:1042px" width="32" height="30" viewBox="0 0 32 30"><rect x="4" y="2" width="24" height="18" fill="#102010" stroke="#a0a8a8" stroke-width="1.5"/><path d="M7 6h6M7 9h9M7 12h5M15 12h6M7 15h8" stroke="#40e040" stroke-width="1.4"/><path d="M10 22 H22 L24 27 H8Z" fill="#c8ccd0"/></svg>
<svg class="a" style="left:731px;top:1040px" width="32" height="34" viewBox="0 0 32 34"><path d="M2 6 H12 L14 9 H30 V30 H2Z" fill="#e8c860"/><rect x="4" y="4" width="24" height="10" fill="#f8f8f0" stroke="#b0a880" stroke-width="0.5"/><circle cx="10" cy="6" r="1.5" fill="#30a040"/><circle cx="16" cy="5" r="1.5" fill="#e04020"/><path d="M2 13 H30 V30 H2Z" fill="#f8d870"/><path d="M8 30 V21 H24 V30 M10 24 H22" fill="none" stroke="#3a90e0" stroke-width="3"/></svg>
<svg class="a" style="left:797px;top:1045px" width="32" height="24" viewBox="0 0 32 24"><path d="M3 12 C3 5,11 5,16 12 C21 19,29 19,29 12 C29 5,21 5,16 12 C11 19,3 19,3 12Z" fill="none" stroke="#3a6ae0" stroke-width="5"/><path d="M16 12 C21 5,29 5,29 12" fill="none" stroke="#7a40d0" stroke-width="5"/></svg>
<svg class="a" style="left:861px;top:1043px" width="34" height="28" viewBox="0 0 34 28"><rect x="1" y="1" width="32" height="26" fill="#0a0a0a" stroke="#909090" stroke-width="1.5"/><rect x="1" y="1" width="32" height="4" fill="#c0c8d0"/><path d="M5 10 H9 M12 10 L14 13 M18 17 H28" stroke="#d0d0d0" stroke-width="1.5"/></svg>
<svg class="a" style="left:927px;top:1040px" width="32" height="34" viewBox="0 0 32 34"><path d="M3 2 L27 2 L27 32 L3 32Z" fill="#ece4f0" stroke="#a098b0" stroke-width="0.8"/><path d="M3 18 L27 10 L27 32 L3 32Z" fill="#8a5aa8"/><text x="15" y="31" font-family="Liberation Sans" font-weight="bold" font-size="14" fill="#f0f0f0">4</text></svg>
<svg class="a" style="left:992px;top:1041px" width="32" height="32" viewBox="0 0 32 32"><path d="M4 6 L22 3 L22 29 L4 26Z" fill="#f07a40" stroke="#b04010" stroke-width="0.8"/><rect x="13" y="9" width="16" height="15" fill="#fff0e8" stroke="#d06030" stroke-width="0.8"/><path d="M8 12 H12 V20" fill="none" stroke="#fff" stroke-width="2"/><circle cx="22" cy="16" r="4" fill="#e06020"/></svg>
<svg class="a" style="left:1591px;top:1057px" width="16" height="9" viewBox="0 0 16 9"><path d="M0 9 L8 0 L16 9Z" fill="#e8e8e8"/></svg>
<svg class="a" style="left:1635px;top:1043px" width="30" height="31" viewBox="0 0 30 31"><rect x="2" y="4" width="14" height="25" rx="1" fill="none" stroke="#f0f0f0" stroke-width="2.5"/><rect x="5" y="1" width="8" height="3" fill="#f0f0f0"/><rect x="5" y="12" width="8" height="15" fill="#f0f0f0"/><path d="M18 10 H28 V17 Q28 21 23 21 Q18 21 18 17Z M21 4 V10 M25 4 V10 M23 21 V30" stroke="#f0f0f0" stroke-width="2" fill="#f0f0f0"/></svg>
<svg class="a" style="left:1681px;top:1049px" width="24" height="22" viewBox="0 0 24 22"><path d="M1 20h3v1h-3Z M6 16h3v5h-3Z M11 11h3v10h-3Z M16 6h3v15h-3Z" fill="#f0f0f0"/><path d="M21 1h3v20h-3Z" fill="#808080"/></svg>
<svg class="a" style="left:1721px;top:1045px" width="32" height="28" viewBox="0 0 32 28"><path d="M2 9 H8 L15 2 V26 L8 19 H2Z" fill="#f0f0f0"/><path d="M19 9 Q22 14 19 19 M23 6 Q28 14 23 22 M27 3 Q33 14 27 25" stroke="#e0e0e0" stroke-width="1.8" fill="none"/></svg>
<svg class="a" style="left:1764px;top:1043px" width="34" height="32" viewBox="0 0 34 32"><path d="M9 2 L17 7 L9 12 L1 7Z M25 2 L33 7 L25 12 L17 7Z M9 12 L17 17 L9 22 L1 17Z M25 12 L33 17 L25 22 L17 17Z" fill="#4aa8e8"/><path d="M9 24 L17 19 L25 24 L17 29Z" fill="#3a90d8"/><circle cx="25" cy="25" r="6" fill="#20a040" stroke="#f0f0f0" stroke-width="1"/><path d="M22 25 L24.5 27.5 L28.5 22.5" stroke="#fff" stroke-width="1.8" fill="none"/></svg>
<div class="a" style="left:1807px;top:1036px;width:17px;height:44px;background:linear-gradient(90deg,#2a2622,#4a4640);border:1px solid #6a6660"></div>
<svg class="a" style="left:1232px;top:1014px" width="22" height="34" viewBox="0 0 22 34"><path d="M1.5 1.5 V27 L7.5 21.5 L12 31.5 L16.5 29.5 L12 19.5 L19.5 19.5Z" fill="#fff" stroke="#111" stroke-width="1.5" stroke-linejoin="round"/></svg>
</body></html>
